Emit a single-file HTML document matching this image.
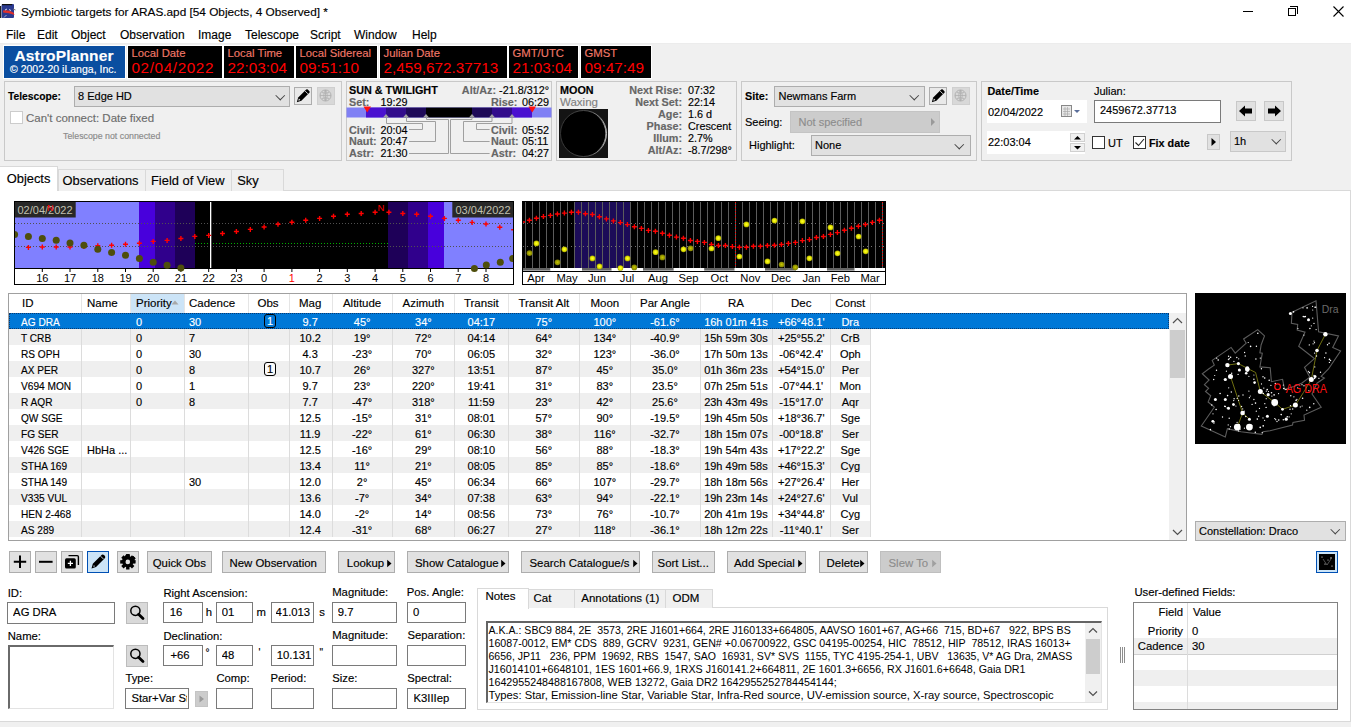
<!DOCTYPE html>
<html><head><meta charset="utf-8">
<style>
*{box-sizing:border-box;margin:0;padding:0}
html,body{width:1351px;height:727px;overflow:hidden;background:#f0f0f0;font-family:"Liberation Sans",sans-serif;font-size:12px;color:#000;-webkit-text-stroke:0.15px}
.blk .v{-webkit-text-stroke:0}
.a{position:absolute;white-space:nowrap}
div{white-space:nowrap}
.t{position:absolute;white-space:nowrap;line-height:1}
.grp{position:absolute;border:1px solid #c9c9c9}
.dd{position:absolute;background:#e1e1e1;border:1px solid #adadad}
.btn{position:absolute;background:#e1e1e1;border:1px solid #adadad;text-align:center}
.inp{position:absolute;background:#fff;border:1px solid #7a7a7a}
.blk{position:absolute;background:#000;top:46px;height:32px;outline:1px solid #fff}
.blk .l{position:absolute;left:3.5px;top:2.2px;font-size:11.3px;color:#f07868;line-height:1}
.blk .v{position:absolute;left:3.5px;top:14px;font-size:15.3px;color:#ff0000;line-height:1}
.chev{position:absolute;width:6.5px;height:6.5px;border-right:1px solid #444;border-bottom:1px solid #444;transform:rotate(45deg)}
</style></head><body>
<!-- title bar -->
<div class="a" style="left:0;top:0;width:1351px;height:43px;background:#fff"></div>
<div class="a" style="left:0;top:42.5px;width:1351px;height:1.5px;background:#ececec"></div>
<svg class="a" style="left:0px;top:0px" width="18" height="22" viewBox="0 0 18 22"><rect x="0" y="6" width="1.3" height="12" fill="#222"/><rect x="1.6" y="4" width="12.4" height="14" rx="1" fill="#2b3a8f"/><rect x="2" y="4" width="10" height="1.2" fill="#111"/><path d="M3 10.5 Q8 9.5 13.5 12.5 L14.5 15 Q9 12.5 3.2 12.5Z" fill="#e0302a"/><path d="M5 10 L7 9 M9 9.5 L11 10.5" stroke="#fff" stroke-width="0.8"/><path d="M13 9 L15.5 10" stroke="#777" stroke-width="1"/><path d="M4 17.5 L6.5 15" stroke="#ddd" stroke-width="0.7"/></svg>
<div class="t" style="left:21px;top:7px;font-size:11.8px">Symbiotic targets for ARAS.apd [54 Objects, 4 Observed] *</div>
<div class="a" style="left:1243px;top:11px;width:10px;height:1px;background:#000"></div>
<div class="a" style="left:1288px;top:8px;width:8px;height:8px;border:1px solid #000"></div>
<div class="a" style="left:1290px;top:6px;width:8px;height:8px;border-top:1px solid #000;border-right:1px solid #000"></div>
<svg class="a" style="left:1333px;top:6px" width="11" height="11"><path d="M0.5 0.5L10.5 10.5M10.5 0.5L0.5 10.5" stroke="#000" stroke-width="1.1"/></svg>
<!-- menu -->
<div class="t" style="left:6px;top:28.8px;font-size:12px">File</div>
<div class="t" style="left:37px;top:28.8px;font-size:12px">Edit</div>
<div class="t" style="left:71px;top:28.8px;font-size:12px">Object</div>
<div class="t" style="left:120px;top:28.8px;font-size:12px">Observation</div>
<div class="t" style="left:198px;top:28.8px;font-size:12px">Image</div>
<div class="t" style="left:245px;top:28.8px;font-size:12px">Telescope</div>
<div class="t" style="left:310px;top:28.8px;font-size:12px">Script</div>
<div class="t" style="left:354px;top:28.8px;font-size:12px">Window</div>
<div class="t" style="left:412px;top:28.8px;font-size:12px">Help</div>

<!-- AstroPlanner logo -->
<div class="a" style="left:4px;top:46px;width:121px;height:32px;background:#0a4ea0;outline:1px solid #fff"></div>
<div class="t" style="left:14.5px;top:47.6px;font-size:15.5px;font-weight:bold;color:#fff;letter-spacing:0.15px">AstroPlanner</div>
<div class="t" style="left:10px;top:63.5px;font-size:10.5px;color:#fff">© 2002-20 iLanga, Inc.</div>

<div class="blk" style="left:128px;width:94px"><div class="l">Local Date</div><div class="v" style="letter-spacing:0.6px">02/04/2022</div></div>
<div class="blk" style="left:224px;width:70px"><div class="l">Local Time</div><div class="v">22:03:04</div></div>
<div class="blk" style="left:296px;width:81px"><div class="l">Local Sidereal</div><div class="v">09:51:10</div></div>
<div class="blk" style="left:380px;width:127px"><div class="l">Julian Date</div><div class="v">2,459,672.37713</div></div>
<div class="blk" style="left:509px;width:69px"><div class="l">GMT/UTC</div><div class="v">21:03:04</div></div>
<div class="blk" style="left:581px;width:70px"><div class="l">GMST</div><div class="v">09:47:49</div></div>


<!-- Telescope panel -->
<div class="grp" style="left:4px;top:81px;width:338px;height:80px"></div>
<div class="t" style="left:8px;top:91.5px;font-size:10.3px;font-weight:bold">Telescope:</div>
<div class="dd" style="left:74px;top:86px;width:216px;height:21px"></div>
<div class="t" style="left:78px;top:91px;font-size:11px">8 Edge HD</div>
<div class="chev" style="left:277px;top:92px"></div>
<div class="btn" style="left:294px;top:87px;width:18px;height:18px;background:#e9e9e9"></div>
<svg class="a" style="left:295px;top:88px" width="16" height="16" viewBox="0 0 16 16"><path d="M1.8 14.2 L3.2 9.6 L11.2 1.6 Q12 0.9 12.8 1.6 L14.4 3.2 Q15.1 4 14.4 4.8 L6.4 12.8 Z" fill="#000"/><path d="M10.2 3.1 L12.9 5.8" stroke="#e9e9e9" stroke-width="0.9"/><path d="M3.3 12.7 L3.9 10.6 L5.4 12.1Z" fill="#e9e9e9"/></svg>
<div class="btn" style="left:317px;top:87px;width:18px;height:18px;background:#d8d8d8;border-color:#cfcfcf"></div>
<svg class="a" style="left:318px;top:88px" width="16" height="16" viewBox="0 0 16 16"><circle cx="7.5" cy="7.5" r="5.5" fill="none" stroke="#b0b0b0"/><path d="M2 7.5H13M7.5 2V13M4 4.5Q7.5 6 11 4.5M4 10.5Q7.5 9 11 10.5M7.5 2Q4 7.5 7.5 13M7.5 2Q11 7.5 7.5 13" fill="none" stroke="#b0b0b0" stroke-width="0.8"/></svg>
<div class="a" style="left:10px;top:111px;width:13px;height:13px;background:#fff;border:1px solid #cccccc"></div>
<div class="t" style="left:26px;top:112.5px;font-size:11.5px;color:#6d6d6d">Can't connect: Date fixed</div>
<div class="t" style="left:63px;top:132px;font-size:8.8px;color:#8a8a8a">Telescope not connected</div>

<!-- Sun panel -->
<div class="grp" style="left:346px;top:81px;width:206px;height:80px"></div>
<div class="t" style="left:349px;top:85px;font-size:10.8px;font-weight:bold">SUN &amp; TWILIGHT</div>
<div class="t" style="left:459px;top:85px;font-size:10.8px;font-weight:bold;color:#666;width:90px;text-align:right">Alt/Az: <span style="color:#000;font-weight:normal">-21.8/312°</span></div>
<div class="t" style="left:349px;top:96.5px;font-size:10.8px;font-weight:bold;color:#666">Set:</div>
<div class="t" style="left:380.5px;top:96.5px;font-size:10.8px">19:29</div>
<div class="t" style="left:491px;top:96.5px;font-size:10.8px;font-weight:bold;color:#666">Rise:</div>
<div class="t" style="left:522px;top:96.5px;font-size:10.8px">06:29</div>
<svg class="a" style="left:346px;top:106px" width="206" height="54" viewBox="0 0 206 54">
<rect x="0.5" y="1.5" width="205" height="10" fill="#8080f4"/>
<rect x="20" y="1.5" width="20" height="10" fill="#4a10d0"/>
<rect x="40" y="1.5" width="20" height="10" fill="#320c8c"/>
<rect x="60" y="1.5" width="20" height="10" fill="#1e0a58"/>
<rect x="80" y="1.5" width="46" height="10" fill="#000"/>
<rect x="126" y="1.5" width="20" height="10" fill="#1e0a58"/>
<rect x="146" y="1.5" width="20" height="10" fill="#320c8c"/>
<rect x="166" y="1.5" width="20" height="10" fill="#4a10d0"/>
<path d="M17.5 0.5 L25 0.5 L21.2 6.5Z M182.5 0.5 L190 0.5 L186.2 6.5Z" fill="#ff1010"/>
<path d="M37 11.5 L40 8 L43 11.5Z M57 11.5 L60 8 L63 11.5Z M77 11.5 L80 8 L83 11.5Z M123 11.5 L126 8 L129 11.5Z M143 11.5 L146 8 L149 11.5Z M163 11.5 L166 8 L169 11.5Z" fill="#a0a0a0"/>
<path d="M40.5 11 V17.5 H76.5 V23.5 H63 M60.5 11 V15.5 H89.5 V35.5 H63 M80.5 11 V13.5 H102.5 V47.5 H63 M126 11 V13.5 H104.5 V47.5 H143.6 M146 11 V15.5 H117.5 V35.5 H143.6 M166 11 V17.5 H130.5 V23.5 H143.6" fill="none" stroke="#a0a0a0" stroke-width="1"/>
</svg>
<div class="t" style="left:349px;top:124.5px;font-size:10.8px;font-weight:bold;color:#666">Civil:</div>
<div class="t" style="left:380.5px;top:124.5px;font-size:10.8px">20:04</div>
<div class="t" style="left:349px;top:136px;font-size:10.8px;font-weight:bold;color:#666">Naut:</div>
<div class="t" style="left:380.5px;top:136px;font-size:10.8px">20:47</div>
<div class="t" style="left:349px;top:148px;font-size:10.8px;font-weight:bold;color:#666">Astr:</div>
<div class="t" style="left:380.5px;top:148px;font-size:10.8px">21:30</div>
<div class="t" style="left:491px;top:124.5px;font-size:10.8px;font-weight:bold;color:#666">Civil:</div>
<div class="t" style="left:522px;top:124.5px;font-size:10.8px">05:52</div>
<div class="t" style="left:491px;top:136px;font-size:10.8px;font-weight:bold;color:#666">Naut:</div>
<div class="t" style="left:522px;top:136px;font-size:10.8px">05:11</div>
<div class="t" style="left:491px;top:148px;font-size:10.8px;font-weight:bold;color:#666">Astr:</div>
<div class="t" style="left:522px;top:148px;font-size:10.8px">04:27</div>

<!-- Moon panel -->
<div class="grp" style="left:556px;top:81px;width:181px;height:80px"></div>
<div class="t" style="left:560px;top:84.5px;font-size:10.8px;font-weight:bold">MOON</div>
<div class="t" style="left:560px;top:96.5px;font-size:11.5px;color:#808080">Waxing</div>
<svg class="a" style="left:559px;top:109px" width="49" height="49" viewBox="0 0 49 49"><defs><linearGradient id="mg" x1="0" x2="1"><stop offset="0" stop-color="#3a3a3a"/><stop offset="0.6" stop-color="#555"/><stop offset="1" stop-color="#d8d8d8"/></linearGradient></defs><rect width="49" height="49" fill="#141414"/><circle cx="24.5" cy="24.5" r="23" fill="#000" stroke="url(#mg)" stroke-width="0.9"/><path d="M36 5.5 A22.5 22.5 0 0 1 36 43.5 A24 22.5 0 0 0 36 5.5Z" fill="#cfcfcf" opacity="0.85"/></svg>
<div class="t" style="left:600px;top:83.6px;width:82px;text-align:right;font-size:10.8px;font-weight:bold;color:#666;line-height:12px">Next Rise:<br>Next Set:<br>Age:<br>Phase:<br>Illum:<br>Alt/Az:</div>
<div class="t" style="left:688px;top:83.6px;font-size:10.8px;line-height:12px">07:32<br>22:14<br>1.6 d<br>Crescent<br>2.7%<br>-8.7/298°</div>

<!-- Site panel -->
<div class="grp" style="left:741px;top:81px;width:236px;height:80px"></div>
<div class="t" style="left:745px;top:91px;font-size:10.8px;font-weight:bold">Site:</div>
<div class="dd" style="left:774px;top:86px;width:151px;height:21px"></div>
<div class="t" style="left:778.5px;top:91px;font-size:11px">Newmans Farm</div>
<div class="chev" style="left:911px;top:92px"></div>
<div class="btn" style="left:929px;top:87px;width:18px;height:18px;background:#e9e9e9"></div>
<svg class="a" style="left:930px;top:88px" width="16" height="16" viewBox="0 0 16 16"><path d="M1.8 14.2 L3.2 9.6 L11.2 1.6 Q12 0.9 12.8 1.6 L14.4 3.2 Q15.1 4 14.4 4.8 L6.4 12.8 Z" fill="#000"/><path d="M10.2 3.1 L12.9 5.8" stroke="#e9e9e9" stroke-width="0.9"/><path d="M3.3 12.7 L3.9 10.6 L5.4 12.1Z" fill="#e9e9e9"/></svg>
<div class="btn" style="left:952px;top:87px;width:18px;height:18px;background:#d8d8d8;border-color:#cfcfcf"></div>
<svg class="a" style="left:953px;top:88px" width="16" height="16" viewBox="0 0 16 16"><circle cx="7.5" cy="7.5" r="5.5" fill="none" stroke="#b0b0b0"/><path d="M2 7.5H13M7.5 2V13M4 4.5Q7.5 6 11 4.5M4 10.5Q7.5 9 11 10.5M7.5 2Q4 7.5 7.5 13M7.5 2Q11 7.5 7.5 13" fill="none" stroke="#b0b0b0" stroke-width="0.8"/></svg>
<div class="t" style="left:745px;top:117px;font-size:11px">Seeing:</div>
<div class="a" style="left:790px;top:111px;width:150px;height:22px;background:#cccccc;border:1px solid #c4c4c4"></div>
<div class="t" style="left:798.5px;top:117px;font-size:11px;color:#8d8d8d">Not specified</div>
<svg class="a" style="left:930px;top:118px" width="6" height="8"><path d="M1 0 L5 4 L1 8Z" fill="#9a9a9a"/></svg>
<div class="t" style="left:749px;top:140px;font-size:11px">Highlight:</div>
<div class="dd" style="left:811px;top:135px;width:160px;height:21px"></div>
<div class="t" style="left:815px;top:140px;font-size:11px">None</div>
<div class="chev" style="left:956px;top:141px"></div>

<!-- Date/time panel -->
<div class="grp" style="left:981px;top:81px;width:311px;height:80px"></div>
<div class="t" style="left:987.5px;top:85.5px;font-size:10.8px;font-weight:bold">Date/Time</div>
<div class="t" style="left:1094px;top:85.5px;font-size:11px">Julian:</div>
<div class="a" style="left:987px;top:100px;width:100px;height:23px;background:#fff"></div>
<div class="t" style="left:988px;top:106.5px;font-size:11px">02/04/2022</div>
<svg class="a" style="left:1060px;top:104px" width="22" height="14" viewBox="0 0 22 14"><rect x="1.5" y="1.5" width="10" height="11" fill="#e8e8e8" stroke="#888"/><path d="M3 5H10M3 7.5H10M3 10H10M5 3V12M7.5 3V12" stroke="#aaa" stroke-width="0.7"/><path d="M14 6 L20 6 L17 9Z" fill="#5a6e9a"/></svg>
<div class="inp" style="left:1094px;top:100px;width:127px;height:23px;border-color:#7a7a7a"></div>
<div class="t" style="left:1100px;top:104.5px;font-size:11px">2459672.37713</div>
<div class="btn" style="left:1236px;top:101px;width:20px;height:20px;background:#e1e1e1;border-color:#c8c8c8"></div>
<svg class="a" style="left:1238px;top:104px" width="16" height="14" viewBox="0 0 16 14"><path d="M1 7 L7 1.5 V4.5 H14 V9.5 H7 V12.5Z" fill="#000"/></svg>
<div class="btn" style="left:1264px;top:101px;width:20px;height:20px;background:#e1e1e1;border-color:#c8c8c8"></div>
<svg class="a" style="left:1266px;top:104px" width="16" height="14" viewBox="0 0 16 14"><path d="M15 7 L9 1.5 V4.5 H2 V9.5 H9 V12.5Z" fill="#000"/></svg>
<div class="a" style="left:987px;top:131px;width:98px;height:23px;background:#fff"></div>
<div class="t" style="left:988px;top:137px;font-size:11px">22:03:04</div>
<div class="a" style="left:1070px;top:133px;width:15px;height:9px;background:#f0f0f0;border:1px solid #d0d0d0"></div>
<div class="a" style="left:1070px;top:143px;width:15px;height:9px;background:#f0f0f0;border:1px solid #d0d0d0"></div>
<svg class="a" style="left:1073px;top:135px" width="9" height="16"><path d="M1 4.5 L4.5 1 L8 4.5Z M1 11 L4.5 14.5 L8 11Z" fill="#000"/></svg>
<div class="a" style="left:1092px;top:136px;width:13px;height:13px;background:#fff;border:1px solid #333"></div>
<div class="t" style="left:1108px;top:137.5px;font-size:11px">UT</div>
<div class="a" style="left:1133px;top:136px;width:13px;height:13px;background:#fff;border:1px solid #333"></div>
<svg class="a" style="left:1134px;top:137px" width="11" height="11"><path d="M1.5 5.5 L4.5 8.5 L10 2" fill="none" stroke="#222" stroke-width="1.1"/></svg>
<div class="t" style="left:1149px;top:137.5px;font-size:10.8px;font-weight:bold">Fix date</div>
<div class="btn" style="left:1207px;top:134px;width:13px;height:16px;background:#e1e1e1;border-color:#c8c8c8"></div>
<svg class="a" style="left:1211px;top:138px" width="6" height="8"><path d="M0.5 0 L5 4 L0.5 8Z" fill="#000"/></svg>
<div class="dd" style="left:1230px;top:131px;width:56px;height:21px;border-color:#c8c8c8"></div>
<div class="t" style="left:1234px;top:136px;font-size:11px">1h</div>
<div class="chev" style="left:1273px;top:136px"></div>

<!-- TOP PANELS -->
<!--mid1-->
<div class="a" style="left:0;top:190px;width:1351px;height:532px;background:#fff;border-top:1px solid #d9d9d9;border-right:1px solid #d9d9d9;border-bottom:1px solid #d9d9d9"></div>
<div class="a" style="left:57.5px;top:168.5px;width:88.0px;height:22.5px;background:#f0f0f0;border:1px solid #d9d9d9;border-bottom:none"></div>
<div class="t" style="left:62.6px;top:175px;font-size:12.9px">Observations</div>
<div class="a" style="left:144.5px;top:168.5px;width:87.0px;height:22.5px;background:#f0f0f0;border:1px solid #d9d9d9;border-bottom:none"></div>
<div class="t" style="left:151px;top:175px;font-size:12.9px">Field of View</div>
<div class="a" style="left:230.5px;top:168.5px;width:53.0px;height:22.5px;background:#f0f0f0;border:1px solid #d9d9d9;border-bottom:none"></div>
<div class="t" style="left:237.2px;top:175px;font-size:12.9px">Sky</div>
<div class="a" style="left:0;top:166px;width:58px;height:25px;background:#fff;border:1px solid #d9d9d9;border-left:none;border-bottom:none"></div>
<div class="t" style="left:6.7px;top:172.5px;font-size:12.9px">Objects</div>
<svg class="a" style="left:14px;top:201px;font-family:'Liberation Sans'" width="500" height="84" viewBox="0 0 500 84"><rect x="0" y="0" width="500" height="84" fill="#fff"/><rect x="0" y="0" width="125" height="67" fill="#8080ff"/><rect x="125" y="0" width="16" height="67" fill="#4800dc"/><rect x="141" y="0" width="20" height="67" fill="#30008c"/><rect x="161" y="0" width="20" height="67" fill="#1e0058"/><rect x="181" y="0" width="193" height="67" fill="#000"/><rect x="374" y="0" width="20" height="67" fill="#1e0058"/><rect x="394" y="0" width="20" height="67" fill="#30008c"/><rect x="414" y="0" width="16" height="67" fill="#4800dc"/><rect x="430" y="0" width="69" height="67" fill="#8080ff"/><line x1="1" y1="22.5" x2="499" y2="22.5" stroke="#505050" stroke-width="1" stroke-dasharray="1 2"/><line x1="1" y1="45.5" x2="499" y2="45.5" stroke="#505050" stroke-width="1" stroke-dasharray="1 2"/><line x1="181" y1="42.5" x2="374" y2="42.5" stroke="#00b000" stroke-width="1" stroke-dasharray="1 2"/><rect x="196" y="0" width="1.3" height="67" fill="#fff"/><path d="M11.9 46.4h5M14.4 43.9v5M25.8 46.0h5M28.3 43.5v5M39.7 46.0h5M42.2 43.5v5M53.5 46.0h5M56.0 43.5v5M67.4 45.5h5M69.9 43.0v5M81.3 44.7h5M83.8 42.2v5M95.1 44.2h5M97.6 41.7v5M109.0 43.3h5M111.5 40.8v5M122.9 42.3h5M125.4 39.8v5M136.7 40.4h5M139.2 37.9v5M150.6 39.4h5M153.1 36.9v5M164.4 37.5h5M166.9 35.0v5M178.3 35.4h5M180.8 32.9v5M192.2 34.4h5M194.7 31.9v5M206.0 32.5h5M208.5 30.0v5M219.9 30.5h5M222.4 28.0v5M233.8 28.4h5M236.3 25.9v5M247.6 26.0h5M250.1 23.5v5M261.5 23.2h5M264.0 20.7v5M275.4 21.2h5M277.9 18.7v5M289.2 19.3h5M291.7 16.8v5M303.1 17.4h5M305.6 14.9v5M317.0 15.2h5M319.5 12.7v5M330.8 13.3h5M333.3 10.8v5M344.7 12.5h5M347.2 10.0v5M358.6 11.3h5M361.1 8.8v5M372.4 11.3h5M374.9 8.8v5M386.3 12.5h5M388.8 10.0v5M400.2 13.3h5M402.7 10.8v5M414.0 15.2h5M416.5 12.7v5M427.9 17.4h5M430.4 14.9v5M441.8 19.3h5M444.2 16.8v5M455.6 21.4h5M458.1 18.9v5M469.5 23.0h5M472.0 20.5v5M483.3 26.3h5M485.8 23.8v5M497.2 28.8h5M499.7 26.3v5" stroke="#ff0000" stroke-width="1.4" fill="none"/><rect x="0" y="67" width="500" height="17" fill="#fff"/><rect x="0.5" y="0.5" width="499" height="83" fill="none" stroke="#000"/><line x1="0" y1="67.5" x2="500" y2="67.5" stroke="#000"/><line x1="28.3" y1="67" x2="28.3" y2="71" stroke="#000"/><text x="28.3" y="81" font-size="11" text-anchor="middle" fill="#000">16</text><line x1="56.0" y1="67" x2="56.0" y2="71" stroke="#000"/><text x="56.0" y="81" font-size="11" text-anchor="middle" fill="#000">17</text><line x1="83.8" y1="67" x2="83.8" y2="71" stroke="#000"/><text x="83.8" y="81" font-size="11" text-anchor="middle" fill="#000">18</text><line x1="111.5" y1="67" x2="111.5" y2="71" stroke="#000"/><text x="111.5" y="81" font-size="11" text-anchor="middle" fill="#000">19</text><line x1="139.2" y1="67" x2="139.2" y2="71" stroke="#000"/><text x="139.2" y="81" font-size="11" text-anchor="middle" fill="#000">20</text><line x1="166.9" y1="67" x2="166.9" y2="71" stroke="#000"/><text x="166.9" y="81" font-size="11" text-anchor="middle" fill="#000">21</text><line x1="194.7" y1="67" x2="194.7" y2="71" stroke="#000"/><text x="194.7" y="81" font-size="11" text-anchor="middle" fill="#000">22</text><line x1="222.4" y1="67" x2="222.4" y2="71" stroke="#000"/><text x="222.4" y="81" font-size="11" text-anchor="middle" fill="#000">23</text><line x1="250.1" y1="67" x2="250.1" y2="71" stroke="#000"/><text x="250.1" y="81" font-size="11" text-anchor="middle" fill="#000">0</text><line x1="277.9" y1="67" x2="277.9" y2="71" stroke="#000"/><text x="277.9" y="81" font-size="11" text-anchor="middle" fill="#ff0000">1</text><line x1="305.6" y1="67" x2="305.6" y2="71" stroke="#000"/><text x="305.6" y="81" font-size="11" text-anchor="middle" fill="#000">2</text><line x1="333.3" y1="67" x2="333.3" y2="71" stroke="#000"/><text x="333.3" y="81" font-size="11" text-anchor="middle" fill="#000">3</text><line x1="361.1" y1="67" x2="361.1" y2="71" stroke="#000"/><text x="361.1" y="81" font-size="11" text-anchor="middle" fill="#000">4</text><line x1="388.8" y1="67" x2="388.8" y2="71" stroke="#000"/><text x="388.8" y="81" font-size="11" text-anchor="middle" fill="#000">5</text><line x1="416.5" y1="67" x2="416.5" y2="71" stroke="#000"/><text x="416.5" y="81" font-size="11" text-anchor="middle" fill="#000">6</text><line x1="444.2" y1="67" x2="444.2" y2="71" stroke="#000"/><text x="444.2" y="81" font-size="11" text-anchor="middle" fill="#000">7</text><line x1="472.0" y1="67" x2="472.0" y2="71" stroke="#000"/><text x="472.0" y="81" font-size="11" text-anchor="middle" fill="#000">8</text><rect x="0" y="0" width="61.7" height="16.5" fill="#282828"/><text x="3.5" y="13" font-size="11" fill="#c0c0b0" textLength="55">02/04/2022</text><rect x="438.3" y="0" width="61.19999999999999" height="16.5" fill="#282828"/><text x="441.5" y="13" font-size="11" fill="#c0c0b0" textLength="55">03/04/2022</text><text x="33" y="10" font-size="9" fill="#ff0000">N</text><circle cx="0.6" cy="33.4" r="3.5" fill="#4e4e0c"/><circle cx="14.4" cy="35.6" r="3.5" fill="#4e4e0c"/><circle cx="28.3" cy="37.5" r="3.5" fill="#4e4e0c"/><circle cx="42.2" cy="39.3" r="3.5" fill="#4e4e0c"/><circle cx="56.0" cy="42.1" r="3.5" fill="#4e4e0c"/><circle cx="69.9" cy="44.3" r="3.5" fill="#4e4e0c"/><circle cx="83.8" cy="48.2" r="3.5" fill="#4e4e0c"/><circle cx="97.6" cy="51.4" r="3.5" fill="#4e4e0c"/><circle cx="111.5" cy="54.3" r="3.5" fill="#4e4e0c"/><circle cx="125.4" cy="57.5" r="3.5" fill="#4e4e0c"/><circle cx="139.2" cy="61.3" r="3.5" fill="#4e4e0c"/><circle cx="153.1" cy="64.2" r="3.5" fill="#4e4e0c"/><circle cx="166.9" cy="67.0" r="3.5" fill="#4e4e0c"/><circle cx="460.4" cy="67.4" r="3.5" fill="#4e4e0c"/><circle cx="472.3" cy="64.0" r="3.5" fill="#4e4e0c"/><circle cx="486.3" cy="61.2" r="3.5" fill="#4e4e0c"/><circle cx="498.7" cy="57.5" r="3.5" fill="#4e4e0c"/><text x="363.5" y="10" font-size="9.5" fill="#ff0000">N</text><rect x="0.5" y="0.5" width="499" height="83" fill="none" stroke="#000"/></svg>
<svg class="a" style="left:522px;top:201px;font-family:'Liberation Sans'" width="364" height="84" viewBox="0 0 364 84"><rect x="0" y="0" width="364" height="84" fill="#fff"/><rect x="0" y="0" width="364" height="67" fill="#000"/><rect x="53" y="0" width="55.5" height="67" fill="#1c0c58"/><rect x="3.0" y="1" width="1" height="66" fill="#5c5c5c"/><rect x="10.0" y="1" width="1" height="66" fill="#5c5c5c"/><rect x="17.0" y="1" width="1" height="66" fill="#5c5c5c"/><rect x="24.0" y="1" width="1" height="66" fill="#5c5c5c"/><rect x="31.0" y="1" width="1" height="66" fill="#5c5c5c"/><rect x="38.0" y="1" width="1" height="66" fill="#5c5c5c"/><rect x="45.0" y="1" width="1" height="66" fill="#5c5c5c"/><rect x="52.0" y="1" width="1" height="66" fill="#5c5c5c"/><rect x="59.0" y="1" width="1" height="66" fill="#5c5c5c"/><rect x="66.0" y="1" width="1" height="66" fill="#5c5c5c"/><rect x="73.0" y="1" width="1" height="66" fill="#5c5c5c"/><rect x="80.0" y="1" width="1" height="66" fill="#5c5c5c"/><rect x="87.0" y="1" width="1" height="66" fill="#5c5c5c"/><rect x="94.0" y="1" width="1" height="66" fill="#5c5c5c"/><rect x="101.0" y="1" width="1" height="66" fill="#5c5c5c"/><rect x="108.0" y="1" width="1" height="66" fill="#5c5c5c"/><rect x="115.0" y="1" width="1" height="66" fill="#5c5c5c"/><rect x="122.0" y="1" width="1" height="66" fill="#5c5c5c"/><rect x="129.0" y="1" width="1" height="66" fill="#5c5c5c"/><rect x="136.0" y="1" width="1" height="66" fill="#5c5c5c"/><rect x="143.0" y="1" width="1" height="66" fill="#5c5c5c"/><rect x="150.0" y="1" width="1" height="66" fill="#5c5c5c"/><rect x="157.0" y="1" width="1" height="66" fill="#5c5c5c"/><rect x="164.0" y="1" width="1" height="66" fill="#5c5c5c"/><rect x="171.0" y="1" width="1" height="66" fill="#5c5c5c"/><rect x="178.0" y="1" width="1" height="66" fill="#5c5c5c"/><rect x="185.0" y="1" width="1" height="66" fill="#5c5c5c"/><rect x="192.0" y="1" width="1" height="66" fill="#5c5c5c"/><rect x="199.0" y="1" width="1" height="66" fill="#5c5c5c"/><rect x="206.0" y="1" width="1" height="66" fill="#5c5c5c"/><rect x="213.0" y="1" width="1" height="66" fill="#5c5c5c"/><rect x="220.0" y="1" width="1" height="66" fill="#5c5c5c"/><rect x="227.0" y="1" width="1" height="66" fill="#5c5c5c"/><rect x="234.0" y="1" width="1" height="66" fill="#5c5c5c"/><rect x="241.0" y="1" width="1" height="66" fill="#5c5c5c"/><rect x="248.0" y="1" width="1" height="66" fill="#5c5c5c"/><rect x="255.0" y="1" width="1" height="66" fill="#5c5c5c"/><rect x="262.0" y="1" width="1" height="66" fill="#5c5c5c"/><rect x="269.0" y="1" width="1" height="66" fill="#5c5c5c"/><rect x="276.0" y="1" width="1" height="66" fill="#5c5c5c"/><rect x="283.0" y="1" width="1" height="66" fill="#5c5c5c"/><rect x="290.0" y="1" width="1" height="66" fill="#5c5c5c"/><rect x="297.0" y="1" width="1" height="66" fill="#5c5c5c"/><rect x="304.0" y="1" width="1" height="66" fill="#5c5c5c"/><rect x="311.0" y="1" width="1" height="66" fill="#5c5c5c"/><rect x="318.0" y="1" width="1" height="66" fill="#5c5c5c"/><rect x="325.0" y="1" width="1" height="66" fill="#5c5c5c"/><rect x="332.0" y="1" width="1" height="66" fill="#5c5c5c"/><rect x="339.0" y="1" width="1" height="66" fill="#5c5c5c"/><rect x="346.0" y="1" width="1" height="66" fill="#5c5c5c"/><rect x="353.0" y="1" width="1" height="66" fill="#5c5c5c"/><rect x="360.0" y="1" width="1" height="66" fill="#5c5c5c"/><line x1="1" y1="22.5" x2="363" y2="22.5" stroke="#707070" stroke-width="1" stroke-dasharray="1 3"/><line x1="1" y1="45.5" x2="363" y2="45.5" stroke="#707070" stroke-width="1" stroke-dasharray="1 3"/><line x1="213.5" y1="1" x2="213.5" y2="67" stroke="#ff0000" stroke-width="1" stroke-dasharray="1 2"/><line x1="360.5" y1="1" x2="360.5" y2="67" stroke="#ff0000" stroke-width="1" stroke-dasharray="1 2"/><path d="M4.9 19.3h5M7.4 16.8v5M11.9 17.3h5M14.4 14.8v5M18.9 15.6h5M21.4 13.1v5M25.9 14.4h5M28.4 11.9v5M32.9 13.0h5M35.4 10.5v5M39.9 12.1h5M42.4 9.6v5M46.9 11.2h5M49.4 8.7v5M53.9 11.2h5M56.4 8.7v5M60.9 12.7h5M63.4 10.2v5M67.9 13.5h5M70.4 11.0v5M74.9 15.8h5M77.4 13.3v5M81.9 17.9h5M84.4 15.4v5M88.9 19.9h5M91.4 17.4v5M95.9 21.6h5M98.4 19.1v5M102.9 23.6h5M105.4 21.1v5M109.9 25.7h5M112.4 23.2v5M116.9 27.4h5M119.4 24.9v5M123.9 29.4h5M126.4 26.9v5M130.9 30.3h5M133.4 27.8v5M137.9 32.3h5M140.4 29.8v5M144.9 34.3h5M147.4 31.8v5M151.9 36.1h5M154.4 33.6v5M158.9 37.2h5M161.4 34.7v5M165.9 39.5h5M168.4 37.0v5M172.9 40.4h5M175.4 37.9v5M179.9 41.4h5M182.4 38.9v5M186.9 43.5h5M189.4 41.0v5M193.9 44.5h5M196.4 42.0v5M200.9 44.5h5M203.4 42.0v5M207.9 45.6h5M210.4 43.1v5M214.9 46.3h5M217.4 43.8v5M221.9 46.3h5M224.4 43.8v5M228.9 45.2h5M231.4 42.7v5M235.9 45.2h5M238.4 42.7v5M242.9 44.5h5M245.4 42.0v5M249.9 44.2h5M252.4 41.7v5M256.9 43.5h5M259.4 41.0v5M263.9 42.4h5M266.4 39.9v5M270.9 41.4h5M273.4 38.9v5M277.9 39.6h5M280.4 37.1v5M284.9 38.6h5M287.4 36.1v5M291.9 36.5h5M294.4 34.0v5M298.9 35.5h5M301.4 33.0v5M305.9 33.4h5M308.4 30.9v5M312.9 31.6h5M315.4 29.1v5M319.9 29.2h5M322.4 26.7v5M326.9 27.3h5M329.4 24.8v5M333.9 25.2h5M336.4 22.7v5M340.9 23.5h5M343.4 21.0v5M347.9 21.4h5M350.4 18.9v5M354.9 19.2h5M357.4 16.7v5M1 21h2" stroke="#ff0000" stroke-width="1.4" fill="none"/><defs><radialGradient id="yb"><stop offset="0" stop-color="#ffff30"/><stop offset="0.6" stop-color="#e8e800"/><stop offset="1" stop-color="#a0a000"/></radialGradient><radialGradient id="yd"><stop offset="0" stop-color="#c8c800"/><stop offset="1" stop-color="#808000"/></radialGradient></defs><rect x="0" y="67" width="364" height="17" fill="#fff"/><rect x="1.0" y="67" width="27.5" height="2.6" fill="#646464"/><rect x="28.5" y="67" width="31.5" height="2.6" fill="#ffffff"/><rect x="60.0" y="67" width="29.7" height="2.6" fill="#646464"/><rect x="89.7" y="67" width="31.3" height="2.6" fill="#ffffff"/><rect x="121.0" y="67" width="30.8" height="2.6" fill="#646464"/><rect x="151.8" y="67" width="30.4" height="2.6" fill="#ffffff"/><rect x="182.2" y="67" width="30.5" height="2.6" fill="#646464"/><rect x="212.7" y="67" width="30.3" height="2.6" fill="#ffffff"/><rect x="243.0" y="67" width="31.0" height="2.6" fill="#646464"/><rect x="274.0" y="67" width="31.0" height="2.6" fill="#ffffff"/><rect x="305.0" y="67" width="27.7" height="2.6" fill="#646464"/><rect x="332.7" y="67" width="30.3" height="2.6" fill="#ffffff"/><rect x="0" y="70" width="364" height="1" fill="#000"/><circle cx="7.5" cy="52.2" r="2.85" fill="url(#yd)"/><circle cx="14.4" cy="42.4" r="2.85" fill="url(#yb)"/><circle cx="35.5" cy="61.3" r="2.85" fill="url(#yd)"/><circle cx="42.4" cy="48.3" r="2.85" fill="url(#yb)"/><circle cx="70.4" cy="57.4" r="2.85" fill="url(#yb)"/><circle cx="77.5" cy="65.4" r="2.85" fill="url(#yb)"/><circle cx="98.4" cy="67.0" r="2.85" fill="url(#yb)"/><circle cx="105.5" cy="57.4" r="2.85" fill="url(#yb)"/><circle cx="112.3" cy="66.4" r="2.85" fill="url(#yd)"/><circle cx="133.6" cy="51.2" r="2.85" fill="url(#yb)"/><circle cx="140.4" cy="56.4" r="2.85" fill="url(#yd)"/><circle cx="161.5" cy="48.3" r="2.85" fill="url(#yb)"/><circle cx="168.6" cy="47.3" r="2.85" fill="url(#yd)"/><circle cx="189.5" cy="47.5" r="2.85" fill="url(#yb)"/><circle cx="196.3" cy="37.2" r="2.85" fill="url(#yb)"/><circle cx="217.4" cy="55.5" r="2.85" fill="url(#yb)"/><circle cx="224.4" cy="23.4" r="2.85" fill="url(#yb)"/><circle cx="245.5" cy="60.4" r="2.85" fill="url(#yb)"/><circle cx="252.5" cy="19.6" r="2.85" fill="url(#yb)"/><circle cx="259.6" cy="63.5" r="2.85" fill="url(#yd)"/><circle cx="273.3" cy="66.3" r="2.85" fill="url(#yd)"/><circle cx="280.4" cy="20.3" r="2.85" fill="url(#yb)"/><circle cx="287.4" cy="57.3" r="2.85" fill="url(#yb)"/><circle cx="308.5" cy="26.4" r="2.85" fill="url(#yb)"/><circle cx="315.5" cy="52.4" r="2.85" fill="url(#yb)"/><circle cx="336.6" cy="35.5" r="2.85" fill="url(#yb)"/><circle cx="343.7" cy="50.3" r="2.85" fill="url(#yb)"/><text x="14" y="80.5" font-size="11.2" text-anchor="middle" fill="#000">Apr</text><text x="45" y="80.5" font-size="11.2" text-anchor="middle" fill="#000">May</text><text x="75" y="80.5" font-size="11.2" text-anchor="middle" fill="#000">Jun</text><text x="105" y="80.5" font-size="11.2" text-anchor="middle" fill="#000">Jul</text><text x="136" y="80.5" font-size="11.2" text-anchor="middle" fill="#000">Aug</text><text x="166.5" y="80.5" font-size="11.2" text-anchor="middle" fill="#000">Sep</text><text x="197.29999999999995" y="80.5" font-size="11.2" text-anchor="middle" fill="#000">Oct</text><text x="228.29999999999995" y="80.5" font-size="11.2" text-anchor="middle" fill="#000">Nov</text><text x="258.9" y="80.5" font-size="11.2" text-anchor="middle" fill="#000">Dec</text><text x="289.5" y="80.5" font-size="11.2" text-anchor="middle" fill="#000">Jan</text><text x="318.29999999999995" y="80.5" font-size="11.2" text-anchor="middle" fill="#000">Feb</text><text x="348.20000000000005" y="80.5" font-size="11.2" text-anchor="middle" fill="#000">Mar</text><rect x="0.5" y="0.5" width="363" height="83" fill="none" stroke="#000"/></svg>
<!--/mid1-->
<!--table-->
<div class="a" style="left:8px;top:293px;width:1179px;height:248px;background:#fff;border:1px solid #a0a0a0"></div>
<div class="a" style="left:130.5px;top:294px;width:53px;height:19px;background:#cce4f7"></div>
<div class="a" style="left:9px;top:313px;width:1160px;height:16px;background:#0078d7;outline:1px dotted #0a3a70;outline-offset:-1px"></div>
<div class="a" style="left:9px;top:329px;width:862px;height:16px;background:#efefef"></div>
<div class="a" style="left:9px;top:361px;width:862px;height:16px;background:#efefef"></div>
<div class="a" style="left:9px;top:393px;width:862px;height:16px;background:#efefef"></div>
<div class="a" style="left:9px;top:425px;width:862px;height:16px;background:#efefef"></div>
<div class="a" style="left:9px;top:457px;width:862px;height:16px;background:#efefef"></div>
<div class="a" style="left:9px;top:489px;width:862px;height:16px;background:#efefef"></div>
<div class="a" style="left:9px;top:521px;width:862px;height:16px;background:#efefef"></div>
<div class="a" style="left:81px;top:294px;width:1px;height:19px;background:#e5e5e5"></div>
<div class="a" style="left:81px;top:329px;width:1px;height:208px;background:#dcdcdc"></div>
<div class="a" style="left:130px;top:294px;width:1px;height:19px;background:#e5e5e5"></div>
<div class="a" style="left:130px;top:329px;width:1px;height:208px;background:#dcdcdc"></div>
<div class="a" style="left:183.5px;top:294px;width:1px;height:19px;background:#e5e5e5"></div>
<div class="a" style="left:183.5px;top:329px;width:1px;height:208px;background:#dcdcdc"></div>
<div class="a" style="left:247.5px;top:294px;width:1px;height:19px;background:#e5e5e5"></div>
<div class="a" style="left:247.5px;top:329px;width:1px;height:208px;background:#dcdcdc"></div>
<div class="a" style="left:288.5px;top:294px;width:1px;height:19px;background:#e5e5e5"></div>
<div class="a" style="left:288.5px;top:329px;width:1px;height:208px;background:#dcdcdc"></div>
<div class="a" style="left:331.8px;top:294px;width:1px;height:19px;background:#e5e5e5"></div>
<div class="a" style="left:331.8px;top:329px;width:1px;height:208px;background:#dcdcdc"></div>
<div class="a" style="left:392.4px;top:294px;width:1px;height:19px;background:#e5e5e5"></div>
<div class="a" style="left:392.4px;top:329px;width:1px;height:208px;background:#dcdcdc"></div>
<div class="a" style="left:454.3px;top:294px;width:1px;height:19px;background:#e5e5e5"></div>
<div class="a" style="left:454.3px;top:329px;width:1px;height:208px;background:#dcdcdc"></div>
<div class="a" style="left:508.3px;top:294px;width:1px;height:19px;background:#e5e5e5"></div>
<div class="a" style="left:508.3px;top:329px;width:1px;height:208px;background:#dcdcdc"></div>
<div class="a" style="left:579.3px;top:294px;width:1px;height:19px;background:#e5e5e5"></div>
<div class="a" style="left:579.3px;top:329px;width:1px;height:208px;background:#dcdcdc"></div>
<div class="a" style="left:630.3px;top:294px;width:1px;height:19px;background:#e5e5e5"></div>
<div class="a" style="left:630.3px;top:329px;width:1px;height:208px;background:#dcdcdc"></div>
<div class="a" style="left:699.6px;top:294px;width:1px;height:19px;background:#e5e5e5"></div>
<div class="a" style="left:699.6px;top:329px;width:1px;height:208px;background:#dcdcdc"></div>
<div class="a" style="left:772.3px;top:294px;width:1px;height:19px;background:#e5e5e5"></div>
<div class="a" style="left:772.3px;top:329px;width:1px;height:208px;background:#dcdcdc"></div>
<div class="a" style="left:830.2px;top:294px;width:1px;height:19px;background:#e5e5e5"></div>
<div class="a" style="left:830.2px;top:329px;width:1px;height:208px;background:#dcdcdc"></div>
<div class="a" style="left:870.4px;top:294px;width:1px;height:19px;background:#e5e5e5"></div>
<div class="a" style="left:870.4px;top:329px;width:1px;height:208px;background:#dcdcdc"></div>
<div class="t" style="left:22px;top:297.5px;font-size:11.5px">ID</div>
<div class="t" style="left:87px;top:297.5px;font-size:11.5px">Name</div>
<div class="t" style="left:136px;top:297.5px;font-size:11.5px">Priority</div>
<div class="t" style="left:189px;top:297.5px;font-size:11.5px">Cadence</div>
<div class="t" style="left:247.5px;top:297.5px;width:41.0px;text-align:center;font-size:11.5px">Obs</div>
<div class="t" style="left:288.5px;top:297.5px;width:43.30000000000001px;text-align:center;font-size:11.5px">Mag</div>
<div class="t" style="left:331.8px;top:297.5px;width:60.599999999999966px;text-align:center;font-size:11.5px">Altitude</div>
<div class="t" style="left:392.4px;top:297.5px;width:61.900000000000034px;text-align:center;font-size:11.5px">Azimuth</div>
<div class="t" style="left:454.3px;top:297.5px;width:54.0px;text-align:center;font-size:11.5px">Transit</div>
<div class="t" style="left:508.3px;top:297.5px;width:70.99999999999994px;text-align:center;font-size:11.5px">Transit Alt</div>
<div class="t" style="left:579.3px;top:297.5px;width:51.0px;text-align:center;font-size:11.5px">Moon</div>
<div class="t" style="left:630.3px;top:297.5px;width:69.30000000000007px;text-align:center;font-size:11.5px">Par Angle</div>
<div class="t" style="left:699.6px;top:297.5px;width:72.69999999999993px;text-align:center;font-size:11.5px">RA</div>
<div class="t" style="left:772.3px;top:297.5px;width:57.90000000000009px;text-align:center;font-size:11.5px">Dec</div>
<div class="t" style="left:830.2px;top:297.5px;width:40.19999999999993px;text-align:center;font-size:11.5px">Const</div>
<svg class="a" style="left:171px;top:299px" width="8" height="6"><path d="M0.5 5.5 L4 1.5 L7.5 5.5Z" fill="#a8a8a8"/></svg>
<div class="t" style="left:21.2px;top:316.5px;font-size:11px;color:#fff;transform:scaleX(0.92);transform-origin:0 0;">AG DRA</div>
<div class="t" style="left:136px;top:316.5px;font-size:11px;color:#fff;">0</div>
<div class="t" style="left:189px;top:316.5px;font-size:11px;color:#fff;">30</div>
<div class="a" style="left:264.3px;top:313.7px;width:11.5px;height:14px;border:1.6px solid #000;border-radius:3px;background:#0078d7"></div>
<div class="t" style="left:264.3px;top:316.3px;width:11.5px;text-align:center;font-size:11px;color:#fff">1</div>
<div class="t" style="left:288.5px;top:316.5px;width:43.30000000000001px;text-align:center;font-size:11px;color:#fff">9.7</div>
<div class="t" style="left:331.8px;top:316.5px;width:60.599999999999966px;text-align:center;font-size:11px;color:#fff">45°</div>
<div class="t" style="left:392.4px;top:316.5px;width:61.900000000000034px;text-align:center;font-size:11px;color:#fff">34°</div>
<div class="t" style="left:454.3px;top:316.5px;width:54.0px;text-align:center;font-size:11px;color:#fff">04:17</div>
<div class="t" style="left:508.3px;top:316.5px;width:70.99999999999994px;text-align:center;font-size:11px;color:#fff">75°</div>
<div class="t" style="left:579.3px;top:316.5px;width:51.0px;text-align:center;font-size:11px;color:#fff">100°</div>
<div class="t" style="left:630.3px;top:316.5px;width:69.30000000000007px;text-align:center;font-size:11px;color:#fff">-61.6°</div>
<div class="t" style="left:699.6px;top:316.5px;width:72.69999999999993px;text-align:center;font-size:11px;color:#fff">16h 01m 41s</div>
<div class="t" style="left:772.3px;top:316.5px;width:57.90000000000009px;text-align:center;font-size:11px;color:#fff">+66°48.1'</div>
<div class="t" style="left:830.2px;top:316.5px;width:40.19999999999993px;text-align:center;font-size:11px;color:#fff">Dra</div>
<div class="t" style="left:21.2px;top:332.5px;font-size:11px;color:#000;transform:scaleX(0.92);transform-origin:0 0;">T CRB</div>
<div class="t" style="left:136px;top:332.5px;font-size:11px;color:#000;">0</div>
<div class="t" style="left:189px;top:332.5px;font-size:11px;color:#000;">7</div>
<div class="t" style="left:288.5px;top:332.5px;width:43.30000000000001px;text-align:center;font-size:11px;color:#000">10.2</div>
<div class="t" style="left:331.8px;top:332.5px;width:60.599999999999966px;text-align:center;font-size:11px;color:#000">19°</div>
<div class="t" style="left:392.4px;top:332.5px;width:61.900000000000034px;text-align:center;font-size:11px;color:#000">72°</div>
<div class="t" style="left:454.3px;top:332.5px;width:54.0px;text-align:center;font-size:11px;color:#000">04:14</div>
<div class="t" style="left:508.3px;top:332.5px;width:70.99999999999994px;text-align:center;font-size:11px;color:#000">64°</div>
<div class="t" style="left:579.3px;top:332.5px;width:51.0px;text-align:center;font-size:11px;color:#000">134°</div>
<div class="t" style="left:630.3px;top:332.5px;width:69.30000000000007px;text-align:center;font-size:11px;color:#000">-40.9°</div>
<div class="t" style="left:699.6px;top:332.5px;width:72.69999999999993px;text-align:center;font-size:11px;color:#000">15h 59m 30s</div>
<div class="t" style="left:772.3px;top:332.5px;width:57.90000000000009px;text-align:center;font-size:11px;color:#000">+25°55.2'</div>
<div class="t" style="left:830.2px;top:332.5px;width:40.19999999999993px;text-align:center;font-size:11px;color:#000">CrB</div>
<div class="t" style="left:21.2px;top:348.5px;font-size:11px;color:#000;transform:scaleX(0.92);transform-origin:0 0;">RS OPH</div>
<div class="t" style="left:136px;top:348.5px;font-size:11px;color:#000;">0</div>
<div class="t" style="left:189px;top:348.5px;font-size:11px;color:#000;">30</div>
<div class="t" style="left:288.5px;top:348.5px;width:43.30000000000001px;text-align:center;font-size:11px;color:#000">4.3</div>
<div class="t" style="left:331.8px;top:348.5px;width:60.599999999999966px;text-align:center;font-size:11px;color:#000">-23°</div>
<div class="t" style="left:392.4px;top:348.5px;width:61.900000000000034px;text-align:center;font-size:11px;color:#000">70°</div>
<div class="t" style="left:454.3px;top:348.5px;width:54.0px;text-align:center;font-size:11px;color:#000">06:05</div>
<div class="t" style="left:508.3px;top:348.5px;width:70.99999999999994px;text-align:center;font-size:11px;color:#000">32°</div>
<div class="t" style="left:579.3px;top:348.5px;width:51.0px;text-align:center;font-size:11px;color:#000">123°</div>
<div class="t" style="left:630.3px;top:348.5px;width:69.30000000000007px;text-align:center;font-size:11px;color:#000">-36.0°</div>
<div class="t" style="left:699.6px;top:348.5px;width:72.69999999999993px;text-align:center;font-size:11px;color:#000">17h 50m 13s</div>
<div class="t" style="left:772.3px;top:348.5px;width:57.90000000000009px;text-align:center;font-size:11px;color:#000">-06°42.4'</div>
<div class="t" style="left:830.2px;top:348.5px;width:40.19999999999993px;text-align:center;font-size:11px;color:#000">Oph</div>
<div class="t" style="left:21.2px;top:364.5px;font-size:11px;color:#000;transform:scaleX(0.92);transform-origin:0 0;">AX PER</div>
<div class="t" style="left:136px;top:364.5px;font-size:11px;color:#000;">0</div>
<div class="t" style="left:189px;top:364.5px;font-size:11px;color:#000;">8</div>
<div class="a" style="left:264.3px;top:361.7px;width:11.5px;height:14px;border:1.6px solid #000;border-radius:3px;background:#fafafa"></div>
<div class="t" style="left:264.3px;top:364.3px;width:11.5px;text-align:center;font-size:11px;color:#000">1</div>
<div class="t" style="left:288.5px;top:364.5px;width:43.30000000000001px;text-align:center;font-size:11px;color:#000">10.7</div>
<div class="t" style="left:331.8px;top:364.5px;width:60.599999999999966px;text-align:center;font-size:11px;color:#000">26°</div>
<div class="t" style="left:392.4px;top:364.5px;width:61.900000000000034px;text-align:center;font-size:11px;color:#000">327°</div>
<div class="t" style="left:454.3px;top:364.5px;width:54.0px;text-align:center;font-size:11px;color:#000">13:51</div>
<div class="t" style="left:508.3px;top:364.5px;width:70.99999999999994px;text-align:center;font-size:11px;color:#000">87°</div>
<div class="t" style="left:579.3px;top:364.5px;width:51.0px;text-align:center;font-size:11px;color:#000">45°</div>
<div class="t" style="left:630.3px;top:364.5px;width:69.30000000000007px;text-align:center;font-size:11px;color:#000">35.0°</div>
<div class="t" style="left:699.6px;top:364.5px;width:72.69999999999993px;text-align:center;font-size:11px;color:#000">01h 36m 23s</div>
<div class="t" style="left:772.3px;top:364.5px;width:57.90000000000009px;text-align:center;font-size:11px;color:#000">+54°15.0'</div>
<div class="t" style="left:830.2px;top:364.5px;width:40.19999999999993px;text-align:center;font-size:11px;color:#000">Per</div>
<div class="t" style="left:21.2px;top:380.5px;font-size:11px;color:#000;transform:scaleX(0.92);transform-origin:0 0;">V694 MON</div>
<div class="t" style="left:136px;top:380.5px;font-size:11px;color:#000;">0</div>
<div class="t" style="left:189px;top:380.5px;font-size:11px;color:#000;">1</div>
<div class="t" style="left:288.5px;top:380.5px;width:43.30000000000001px;text-align:center;font-size:11px;color:#000">9.7</div>
<div class="t" style="left:331.8px;top:380.5px;width:60.599999999999966px;text-align:center;font-size:11px;color:#000">23°</div>
<div class="t" style="left:392.4px;top:380.5px;width:61.900000000000034px;text-align:center;font-size:11px;color:#000">220°</div>
<div class="t" style="left:454.3px;top:380.5px;width:54.0px;text-align:center;font-size:11px;color:#000">19:41</div>
<div class="t" style="left:508.3px;top:380.5px;width:70.99999999999994px;text-align:center;font-size:11px;color:#000">31°</div>
<div class="t" style="left:579.3px;top:380.5px;width:51.0px;text-align:center;font-size:11px;color:#000">83°</div>
<div class="t" style="left:630.3px;top:380.5px;width:69.30000000000007px;text-align:center;font-size:11px;color:#000">23.5°</div>
<div class="t" style="left:699.6px;top:380.5px;width:72.69999999999993px;text-align:center;font-size:11px;color:#000">07h 25m 51s</div>
<div class="t" style="left:772.3px;top:380.5px;width:57.90000000000009px;text-align:center;font-size:11px;color:#000">-07°44.1'</div>
<div class="t" style="left:830.2px;top:380.5px;width:40.19999999999993px;text-align:center;font-size:11px;color:#000">Mon</div>
<div class="t" style="left:21.2px;top:396.5px;font-size:11px;color:#000;transform:scaleX(0.92);transform-origin:0 0;">R AQR</div>
<div class="t" style="left:136px;top:396.5px;font-size:11px;color:#000;">0</div>
<div class="t" style="left:189px;top:396.5px;font-size:11px;color:#000;">8</div>
<div class="t" style="left:288.5px;top:396.5px;width:43.30000000000001px;text-align:center;font-size:11px;color:#000">7.7</div>
<div class="t" style="left:331.8px;top:396.5px;width:60.599999999999966px;text-align:center;font-size:11px;color:#000">-47°</div>
<div class="t" style="left:392.4px;top:396.5px;width:61.900000000000034px;text-align:center;font-size:11px;color:#000">318°</div>
<div class="t" style="left:454.3px;top:396.5px;width:54.0px;text-align:center;font-size:11px;color:#000">11:59</div>
<div class="t" style="left:508.3px;top:396.5px;width:70.99999999999994px;text-align:center;font-size:11px;color:#000">23°</div>
<div class="t" style="left:579.3px;top:396.5px;width:51.0px;text-align:center;font-size:11px;color:#000">42°</div>
<div class="t" style="left:630.3px;top:396.5px;width:69.30000000000007px;text-align:center;font-size:11px;color:#000">25.6°</div>
<div class="t" style="left:699.6px;top:396.5px;width:72.69999999999993px;text-align:center;font-size:11px;color:#000">23h 43m 49s</div>
<div class="t" style="left:772.3px;top:396.5px;width:57.90000000000009px;text-align:center;font-size:11px;color:#000">-15°17.0'</div>
<div class="t" style="left:830.2px;top:396.5px;width:40.19999999999993px;text-align:center;font-size:11px;color:#000">Aqr</div>
<div class="t" style="left:21.2px;top:412.5px;font-size:11px;color:#000;transform:scaleX(0.92);transform-origin:0 0;">QW SGE</div>
<div class="t" style="left:288.5px;top:412.5px;width:43.30000000000001px;text-align:center;font-size:11px;color:#000">12.5</div>
<div class="t" style="left:331.8px;top:412.5px;width:60.599999999999966px;text-align:center;font-size:11px;color:#000">-15°</div>
<div class="t" style="left:392.4px;top:412.5px;width:61.900000000000034px;text-align:center;font-size:11px;color:#000">31°</div>
<div class="t" style="left:454.3px;top:412.5px;width:54.0px;text-align:center;font-size:11px;color:#000">08:01</div>
<div class="t" style="left:508.3px;top:412.5px;width:70.99999999999994px;text-align:center;font-size:11px;color:#000">57°</div>
<div class="t" style="left:579.3px;top:412.5px;width:51.0px;text-align:center;font-size:11px;color:#000">90°</div>
<div class="t" style="left:630.3px;top:412.5px;width:69.30000000000007px;text-align:center;font-size:11px;color:#000">-19.5°</div>
<div class="t" style="left:699.6px;top:412.5px;width:72.69999999999993px;text-align:center;font-size:11px;color:#000">19h 45m 50s</div>
<div class="t" style="left:772.3px;top:412.5px;width:57.90000000000009px;text-align:center;font-size:11px;color:#000">+18°36.7'</div>
<div class="t" style="left:830.2px;top:412.5px;width:40.19999999999993px;text-align:center;font-size:11px;color:#000">Sge</div>
<div class="t" style="left:21.2px;top:428.5px;font-size:11px;color:#000;transform:scaleX(0.92);transform-origin:0 0;">FG SER</div>
<div class="t" style="left:288.5px;top:428.5px;width:43.30000000000001px;text-align:center;font-size:11px;color:#000">11.9</div>
<div class="t" style="left:331.8px;top:428.5px;width:60.599999999999966px;text-align:center;font-size:11px;color:#000">-22°</div>
<div class="t" style="left:392.4px;top:428.5px;width:61.900000000000034px;text-align:center;font-size:11px;color:#000">61°</div>
<div class="t" style="left:454.3px;top:428.5px;width:54.0px;text-align:center;font-size:11px;color:#000">06:30</div>
<div class="t" style="left:508.3px;top:428.5px;width:70.99999999999994px;text-align:center;font-size:11px;color:#000">38°</div>
<div class="t" style="left:579.3px;top:428.5px;width:51.0px;text-align:center;font-size:11px;color:#000">116°</div>
<div class="t" style="left:630.3px;top:428.5px;width:69.30000000000007px;text-align:center;font-size:11px;color:#000">-32.7°</div>
<div class="t" style="left:699.6px;top:428.5px;width:72.69999999999993px;text-align:center;font-size:11px;color:#000">18h 15m 07s</div>
<div class="t" style="left:772.3px;top:428.5px;width:57.90000000000009px;text-align:center;font-size:11px;color:#000">-00°18.8'</div>
<div class="t" style="left:830.2px;top:428.5px;width:40.19999999999993px;text-align:center;font-size:11px;color:#000">Ser</div>
<div class="t" style="left:21.2px;top:444.5px;font-size:11px;color:#000;transform:scaleX(0.92);transform-origin:0 0;">V426 SGE</div>
<div class="t" style="left:87px;top:444.5px;font-size:11px;color:#000;">HbHa ...</div>
<div class="t" style="left:288.5px;top:444.5px;width:43.30000000000001px;text-align:center;font-size:11px;color:#000">12.5</div>
<div class="t" style="left:331.8px;top:444.5px;width:60.599999999999966px;text-align:center;font-size:11px;color:#000">-16°</div>
<div class="t" style="left:392.4px;top:444.5px;width:61.900000000000034px;text-align:center;font-size:11px;color:#000">29°</div>
<div class="t" style="left:454.3px;top:444.5px;width:54.0px;text-align:center;font-size:11px;color:#000">08:10</div>
<div class="t" style="left:508.3px;top:444.5px;width:70.99999999999994px;text-align:center;font-size:11px;color:#000">56°</div>
<div class="t" style="left:579.3px;top:444.5px;width:51.0px;text-align:center;font-size:11px;color:#000">88°</div>
<div class="t" style="left:630.3px;top:444.5px;width:69.30000000000007px;text-align:center;font-size:11px;color:#000">-18.3°</div>
<div class="t" style="left:699.6px;top:444.5px;width:72.69999999999993px;text-align:center;font-size:11px;color:#000">19h 54m 43s</div>
<div class="t" style="left:772.3px;top:444.5px;width:57.90000000000009px;text-align:center;font-size:11px;color:#000">+17°22.2'</div>
<div class="t" style="left:830.2px;top:444.5px;width:40.19999999999993px;text-align:center;font-size:11px;color:#000">Sge</div>
<div class="t" style="left:21.2px;top:460.5px;font-size:11px;color:#000;transform:scaleX(0.92);transform-origin:0 0;">STHA 169</div>
<div class="t" style="left:288.5px;top:460.5px;width:43.30000000000001px;text-align:center;font-size:11px;color:#000">13.4</div>
<div class="t" style="left:331.8px;top:460.5px;width:60.599999999999966px;text-align:center;font-size:11px;color:#000">11°</div>
<div class="t" style="left:392.4px;top:460.5px;width:61.900000000000034px;text-align:center;font-size:11px;color:#000">21°</div>
<div class="t" style="left:454.3px;top:460.5px;width:54.0px;text-align:center;font-size:11px;color:#000">08:05</div>
<div class="t" style="left:508.3px;top:460.5px;width:70.99999999999994px;text-align:center;font-size:11px;color:#000">85°</div>
<div class="t" style="left:579.3px;top:460.5px;width:51.0px;text-align:center;font-size:11px;color:#000">85°</div>
<div class="t" style="left:630.3px;top:460.5px;width:69.30000000000007px;text-align:center;font-size:11px;color:#000">-18.6°</div>
<div class="t" style="left:699.6px;top:460.5px;width:72.69999999999993px;text-align:center;font-size:11px;color:#000">19h 49m 58s</div>
<div class="t" style="left:772.3px;top:460.5px;width:57.90000000000009px;text-align:center;font-size:11px;color:#000">+46°15.3'</div>
<div class="t" style="left:830.2px;top:460.5px;width:40.19999999999993px;text-align:center;font-size:11px;color:#000">Cyg</div>
<div class="t" style="left:21.2px;top:476.5px;font-size:11px;color:#000;transform:scaleX(0.92);transform-origin:0 0;">STHA 149</div>
<div class="t" style="left:189px;top:476.5px;font-size:11px;color:#000;">30</div>
<div class="t" style="left:288.5px;top:476.5px;width:43.30000000000001px;text-align:center;font-size:11px;color:#000">12.0</div>
<div class="t" style="left:331.8px;top:476.5px;width:60.599999999999966px;text-align:center;font-size:11px;color:#000">2°</div>
<div class="t" style="left:392.4px;top:476.5px;width:61.900000000000034px;text-align:center;font-size:11px;color:#000">45°</div>
<div class="t" style="left:454.3px;top:476.5px;width:54.0px;text-align:center;font-size:11px;color:#000">06:34</div>
<div class="t" style="left:508.3px;top:476.5px;width:70.99999999999994px;text-align:center;font-size:11px;color:#000">66°</div>
<div class="t" style="left:579.3px;top:476.5px;width:51.0px;text-align:center;font-size:11px;color:#000">107°</div>
<div class="t" style="left:630.3px;top:476.5px;width:69.30000000000007px;text-align:center;font-size:11px;color:#000">-29.7°</div>
<div class="t" style="left:699.6px;top:476.5px;width:72.69999999999993px;text-align:center;font-size:11px;color:#000">18h 18m 56s</div>
<div class="t" style="left:772.3px;top:476.5px;width:57.90000000000009px;text-align:center;font-size:11px;color:#000">+27°26.4'</div>
<div class="t" style="left:830.2px;top:476.5px;width:40.19999999999993px;text-align:center;font-size:11px;color:#000">Her</div>
<div class="t" style="left:21.2px;top:492.5px;font-size:11px;color:#000;transform:scaleX(0.92);transform-origin:0 0;">V335 VUL</div>
<div class="t" style="left:288.5px;top:492.5px;width:43.30000000000001px;text-align:center;font-size:11px;color:#000">13.6</div>
<div class="t" style="left:331.8px;top:492.5px;width:60.599999999999966px;text-align:center;font-size:11px;color:#000">-7°</div>
<div class="t" style="left:392.4px;top:492.5px;width:61.900000000000034px;text-align:center;font-size:11px;color:#000">34°</div>
<div class="t" style="left:454.3px;top:492.5px;width:54.0px;text-align:center;font-size:11px;color:#000">07:38</div>
<div class="t" style="left:508.3px;top:492.5px;width:70.99999999999994px;text-align:center;font-size:11px;color:#000">63°</div>
<div class="t" style="left:579.3px;top:492.5px;width:51.0px;text-align:center;font-size:11px;color:#000">94°</div>
<div class="t" style="left:630.3px;top:492.5px;width:69.30000000000007px;text-align:center;font-size:11px;color:#000">-22.1°</div>
<div class="t" style="left:699.6px;top:492.5px;width:72.69999999999993px;text-align:center;font-size:11px;color:#000">19h 23m 14s</div>
<div class="t" style="left:772.3px;top:492.5px;width:57.90000000000009px;text-align:center;font-size:11px;color:#000">+24°27.6'</div>
<div class="t" style="left:830.2px;top:492.5px;width:40.19999999999993px;text-align:center;font-size:11px;color:#000">Vul</div>
<div class="t" style="left:21.2px;top:508.5px;font-size:11px;color:#000;transform:scaleX(0.92);transform-origin:0 0;">HEN 2-468</div>
<div class="t" style="left:288.5px;top:508.5px;width:43.30000000000001px;text-align:center;font-size:11px;color:#000">14.0</div>
<div class="t" style="left:331.8px;top:508.5px;width:60.599999999999966px;text-align:center;font-size:11px;color:#000">-2°</div>
<div class="t" style="left:392.4px;top:508.5px;width:61.900000000000034px;text-align:center;font-size:11px;color:#000">14°</div>
<div class="t" style="left:454.3px;top:508.5px;width:54.0px;text-align:center;font-size:11px;color:#000">08:56</div>
<div class="t" style="left:508.3px;top:508.5px;width:70.99999999999994px;text-align:center;font-size:11px;color:#000">73°</div>
<div class="t" style="left:579.3px;top:508.5px;width:51.0px;text-align:center;font-size:11px;color:#000">76°</div>
<div class="t" style="left:630.3px;top:508.5px;width:69.30000000000007px;text-align:center;font-size:11px;color:#000">-10.7°</div>
<div class="t" style="left:699.6px;top:508.5px;width:72.69999999999993px;text-align:center;font-size:11px;color:#000">20h 41m 19s</div>
<div class="t" style="left:772.3px;top:508.5px;width:57.90000000000009px;text-align:center;font-size:11px;color:#000">+34°44.8'</div>
<div class="t" style="left:830.2px;top:508.5px;width:40.19999999999993px;text-align:center;font-size:11px;color:#000">Cyg</div>
<div class="t" style="left:21.2px;top:524.5px;font-size:11px;color:#000;transform:scaleX(0.92);transform-origin:0 0;">AS 289</div>
<div class="t" style="left:288.5px;top:524.5px;width:43.30000000000001px;text-align:center;font-size:11px;color:#000">12.4</div>
<div class="t" style="left:331.8px;top:524.5px;width:60.599999999999966px;text-align:center;font-size:11px;color:#000">-31°</div>
<div class="t" style="left:392.4px;top:524.5px;width:61.900000000000034px;text-align:center;font-size:11px;color:#000">68°</div>
<div class="t" style="left:454.3px;top:524.5px;width:54.0px;text-align:center;font-size:11px;color:#000">06:27</div>
<div class="t" style="left:508.3px;top:524.5px;width:70.99999999999994px;text-align:center;font-size:11px;color:#000">27°</div>
<div class="t" style="left:579.3px;top:524.5px;width:51.0px;text-align:center;font-size:11px;color:#000">118°</div>
<div class="t" style="left:630.3px;top:524.5px;width:69.30000000000007px;text-align:center;font-size:11px;color:#000">-36.1°</div>
<div class="t" style="left:699.6px;top:524.5px;width:72.69999999999993px;text-align:center;font-size:11px;color:#000">18h 12m 22s</div>
<div class="t" style="left:772.3px;top:524.5px;width:57.90000000000009px;text-align:center;font-size:11px;color:#000">-11°40.1'</div>
<div class="t" style="left:830.2px;top:524.5px;width:40.19999999999993px;text-align:center;font-size:11px;color:#000">Ser</div>
<div class="a" style="left:1169px;top:313px;width:17px;height:227px;background:#f0f0f0"></div>
<div class="a" style="left:1170px;top:330px;width:15px;height:48px;background:#cdcdcd"></div>
<svg class="a" style="left:1172px;top:317px" width="11" height="8"><path d="M1 6 L5.5 1.5 L10 6" fill="none" stroke="#505050" stroke-width="1.2"/></svg>
<svg class="a" style="left:1172px;top:528px" width="11" height="8"><path d="M1 2 L5.5 6.5 L10 2" fill="none" stroke="#505050" stroke-width="1.2"/></svg>
<!--/table-->
<!--sky-->
<svg class="a" style="left:1195px;top:293px;font-family:'Liberation Sans'" width="151" height="151" viewBox="0 0 151 151"><rect width="151" height="151" fill="#000"/><polygon points="97,19.3 121,7.8 123.6,38.7 143.5,42.9 137.7,54.4 145.6,58 133.5,76 126.2,83.4 129.4,85 122,90.2 117,101 126.2,114.2 109,122 109.5,127.3 98,129.4 97.5,132 75,137.7 68,138.8 66.9,141.4 46,138.8 32.4,135.6 30.3,144 6.3,133 19.3,114.2 13.1,109 15.7,102.7 10.5,98.5 13.6,95.4 9.4,91.7 14.1,87 7.3,80.7 13.6,76 19.3,72.1 17.2,67.4 36.1,54.4 40.2,60.1 51.2,50.2 48.6,46 62.7,36.6 69.5,42.9 66.1,52 64.9,59.8 67.3,60.3 64.9,73.9 75.2,74.7 76.4,88.7 87.6,86.3 89.6,96.6 99.5,93.3 107,90 114.8,84.2 109.5,74.3 119.4,65.6 103.7,53.3 110,39.2 102.2,37.1 102.7,31.4 96.4,30.3" fill="none" stroke="#5c5c5c" stroke-width="1.1" stroke-linejoin="miter"/><path d="M35.5,83.4 L47.6,120 L42.3,134.1" fill="none" stroke="#7c7c12" stroke-width="0.9"/><path d="M47.6,120 L54.4,126.2" fill="none" stroke="#7c7c12" stroke-width="0.9"/><path d="M32.4,72.1 L43.4,70.6 L52.3,75.3 L60.6,79.5 L65.3,98.5 L79.7,109.5 L87.5,116.3 L100.4,112.1 L108.4,99.6 L116.3,86.5 L122,57.5 L130.4,41.3" fill="none" stroke="#7c7c12" stroke-width="0.9"/><circle cx="69.7" cy="85.0" r="0.8" fill="#fff"/><circle cx="69.6" cy="127.3" r="0.65" fill="#fff"/><circle cx="31.4" cy="78.2" r="0.65" fill="#fff"/><circle cx="18.0" cy="120.8" r="0.6" fill="#fff"/><circle cx="69.8" cy="110.7" r="0.65" fill="#fff"/><circle cx="94.1" cy="123.9" r="0.6" fill="#fff"/><circle cx="125.5" cy="79.2" r="0.7" fill="#fff"/><circle cx="76.5" cy="99.7" r="0.8" fill="#fff"/><circle cx="113.4" cy="78.3" r="0.6" fill="#fff"/><circle cx="62.3" cy="126.1" r="0.8" fill="#fff"/><circle cx="102.9" cy="35.5" r="0.6" fill="#fff"/><circle cx="95.0" cy="116.3" r="0.7" fill="#fff"/><circle cx="53.2" cy="49.5" r="0.6" fill="#fff"/><circle cx="119.0" cy="30.4" r="0.65" fill="#fff"/><circle cx="109.7" cy="23.7" r="0.8" fill="#fff"/><circle cx="21.7" cy="65.2" r="0.65" fill="#fff"/><circle cx="92.3" cy="123.7" r="0.8" fill="#fff"/><circle cx="74.2" cy="87.2" r="0.8" fill="#fff"/><circle cx="39.1" cy="105.8" r="0.7" fill="#fff"/><circle cx="65.2" cy="134.4" r="0.8" fill="#fff"/><circle cx="108.0" cy="14.8" r="0.65" fill="#fff"/><circle cx="73.5" cy="98.5" r="0.6" fill="#fff"/><circle cx="45.1" cy="136.2" r="0.65" fill="#fff"/><circle cx="112.1" cy="14.9" r="0.8" fill="#fff"/><circle cx="56.8" cy="132.4" r="0.7" fill="#fff"/><circle cx="98.9" cy="103.8" r="0.65" fill="#fff"/><circle cx="110.4" cy="23.5" r="0.7" fill="#fff"/><circle cx="55.3" cy="103.0" r="0.6" fill="#fff"/><circle cx="129.6" cy="64.7" r="0.6" fill="#fff"/><circle cx="88.3" cy="92.1" r="0.6" fill="#fff"/><circle cx="41.8" cy="64.5" r="0.7" fill="#fff"/><circle cx="60.5" cy="110.1" r="0.8" fill="#fff"/><circle cx="68.0" cy="124.9" r="0.6" fill="#fff"/><circle cx="21.1" cy="116.5" r="0.8" fill="#fff"/><circle cx="48.0" cy="102.0" r="0.65" fill="#fff"/><circle cx="79.1" cy="112.8" r="0.7" fill="#fff"/><circle cx="132.5" cy="51.8" r="0.7" fill="#fff"/><circle cx="33.4" cy="66.6" r="0.65" fill="#fff"/><circle cx="130.9" cy="60.0" r="0.7" fill="#fff"/><circle cx="55.2" cy="133.1" r="0.6" fill="#fff"/><circle cx="35.6" cy="64.2" r="0.8" fill="#fff"/><circle cx="101.1" cy="107.4" r="0.8" fill="#fff"/><circle cx="50.8" cy="123.5" r="0.7" fill="#fff"/><circle cx="49.2" cy="118.2" r="0.6" fill="#fff"/><circle cx="32.2" cy="115.0" r="0.7" fill="#fff"/><circle cx="68.8" cy="95.1" r="0.7" fill="#fff"/><circle cx="33.5" cy="72.9" r="0.65" fill="#fff"/><circle cx="107.1" cy="113.0" r="0.6" fill="#fff"/><circle cx="54.4" cy="104.7" r="0.65" fill="#fff"/><circle cx="61.3" cy="118.2" r="0.65" fill="#fff"/><circle cx="108.3" cy="23.6" r="0.8" fill="#fff"/><circle cx="33.2" cy="131.9" r="0.6" fill="#fff"/><circle cx="58.9" cy="86.3" r="0.7" fill="#fff"/><circle cx="71.3" cy="98.1" r="0.65" fill="#fff"/><circle cx="19.2" cy="128.9" r="0.6" fill="#fff"/><circle cx="35.5" cy="133.7" r="0.6" fill="#fff"/><circle cx="118.1" cy="50.8" r="0.6" fill="#fff"/><circle cx="68.0" cy="83.7" r="0.7" fill="#fff"/><circle cx="120.7" cy="14.2" r="0.6" fill="#fff"/><circle cx="117.7" cy="25.1" r="0.65" fill="#fff"/><circle cx="79.1" cy="101.9" r="0.8" fill="#fff"/><circle cx="36.7" cy="80.3" r="0.7" fill="#fff"/><circle cx="123.9" cy="85.3" r="0.65" fill="#fff"/><circle cx="79.8" cy="125.6" r="0.7" fill="#fff"/><circle cx="49.6" cy="59.5" r="0.65" fill="#fff"/><circle cx="58.9" cy="82.0" r="0.6" fill="#fff"/><circle cx="119.6" cy="85.5" r="0.8" fill="#fff"/><circle cx="62.8" cy="40.2" r="0.8" fill="#fff"/><circle cx="23.2" cy="67.0" r="0.8" fill="#fff"/><circle cx="42.2" cy="105.4" r="0.6" fill="#fff"/><circle cx="88.3" cy="126.8" r="0.7" fill="#fff"/><circle cx="107.6" cy="105.3" r="0.8" fill="#fff"/><circle cx="82.0" cy="128.5" r="0.65" fill="#fff"/><circle cx="80.7" cy="126.7" r="0.65" fill="#fff"/><circle cx="38.3" cy="110.9" r="0.7" fill="#fff"/><circle cx="134.1" cy="50.2" r="0.7" fill="#fff"/><circle cx="116.3" cy="32.8" r="0.6" fill="#fff"/><circle cx="108.9" cy="42.1" r="0.6" fill="#fff"/><circle cx="67.2" cy="139.6" r="0.65" fill="#fff"/><circle cx="33.7" cy="94.8" r="0.6" fill="#fff"/><circle cx="18.7" cy="86.5" r="0.7" fill="#fff"/><circle cx="21.5" cy="77.3" r="0.7" fill="#fff"/><circle cx="76.9" cy="103.1" r="0.65" fill="#fff"/><circle cx="119.8" cy="73.9" r="0.6" fill="#fff"/><circle cx="34.2" cy="125.2" r="0.7" fill="#fff"/><circle cx="71.1" cy="114.4" r="0.7" fill="#fff"/><circle cx="60.9" cy="66.0" r="0.7" fill="#fff"/><circle cx="66.5" cy="90.9" r="0.6" fill="#fff"/><circle cx="33.6" cy="63.3" r="0.7" fill="#fff"/><circle cx="41.9" cy="135.3" r="0.65" fill="#fff"/><circle cx="121.5" cy="63.0" r="0.7" fill="#fff"/><circle cx="114.7" cy="114.4" r="0.8" fill="#fff"/><circle cx="119.0" cy="48.1" r="0.6" fill="#fff"/><circle cx="105.3" cy="113.9" r="0.6" fill="#fff"/><circle cx="38.9" cy="68.4" r="0.6" fill="#fff"/><circle cx="113.9" cy="97.7" r="0.6" fill="#fff"/><circle cx="96.2" cy="120.8" r="0.6" fill="#fff"/><circle cx="83.6" cy="100.6" r="0.6" fill="#fff"/><circle cx="60.3" cy="139.2" r="0.8" fill="#fff"/><circle cx="75.9" cy="92.4" r="0.6" fill="#fff"/><circle cx="66.4" cy="75.7" r="0.7" fill="#fff"/><circle cx="80.3" cy="90.5" r="0.7" fill="#fff"/><circle cx="43.6" cy="137.9" r="0.7" fill="#fff"/><circle cx="88.8" cy="95.5" r="0.8" fill="#fff"/><circle cx="134.5" cy="66.4" r="0.8" fill="#fff"/><circle cx="40.9" cy="113.0" r="0.6" fill="#fff"/><circle cx="68.3" cy="100.5" r="0.8" fill="#fff"/><circle cx="91.0" cy="96.5" r="0.8" fill="#fff"/><circle cx="57.1" cy="111.4" r="0.65" fill="#fff"/><circle cx="43.8" cy="103.0" r="0.65" fill="#fff"/><circle cx="95.5" cy="112.7" r="0.65" fill="#fff"/><circle cx="102.7" cy="94.9" r="0.6" fill="#fff"/><circle cx="43.7" cy="65.8" r="0.6" fill="#fff"/><circle cx="19.7" cy="82.5" r="0.6" fill="#fff"/><circle cx="55.6" cy="53.4" r="0.8" fill="#fff"/><circle cx="114.9" cy="35.5" r="0.8" fill="#fff"/><circle cx="46.6" cy="113.5" r="0.65" fill="#fff"/><circle cx="18.9" cy="130.2" r="0.6" fill="#fff"/><circle cx="86.2" cy="121.6" r="0.8" fill="#fff"/><circle cx="47.7" cy="115.9" r="0.6" fill="#fff"/><circle cx="49.4" cy="135.2" r="0.6" fill="#fff"/><circle cx="114.3" cy="51.9" r="0.65" fill="#fff"/><circle cx="36.3" cy="99.0" r="0.7" fill="#fff"/><circle cx="135.6" cy="67.6" r="0.7" fill="#fff"/><circle cx="118.8" cy="110.7" r="0.7" fill="#fff"/><circle cx="119.0" cy="82.3" r="0.65" fill="#fff"/><circle cx="30.3" cy="113.5" r="0.7" fill="#fff"/><circle cx="121.1" cy="36.6" r="0.6" fill="#fff"/><circle cx="120.0" cy="14.2" r="0.7" fill="#fff"/><circle cx="117.7" cy="17.0" r="0.6" fill="#fff"/><circle cx="98.5" cy="18.9" r="0.8" fill="#fff"/><circle cx="114.4" cy="79.6" r="0.8" fill="#fff"/><circle cx="61.4" cy="53.3" r="0.7" fill="#fff"/><circle cx="81.8" cy="108.1" r="0.6" fill="#fff"/><circle cx="63.7" cy="123.2" r="0.7" fill="#fff"/><circle cx="79.9" cy="106.5" r="0.6" fill="#fff"/><circle cx="65.3" cy="65.1" r="0.65" fill="#fff"/><circle cx="95.8" cy="102.8" r="0.7" fill="#fff"/><circle cx="34.2" cy="65.8" r="0.7" fill="#fff"/><circle cx="44.2" cy="131.7" r="0.8" fill="#fff"/><circle cx="97.7" cy="116.0" r="0.65" fill="#fff"/><circle cx="119.5" cy="49.7" r="0.65" fill="#fff"/><circle cx="38.7" cy="107.6" r="0.65" fill="#fff"/><circle cx="68.2" cy="132.9" r="0.8" fill="#fff"/><circle cx="29.7" cy="113.3" r="0.7" fill="#fff"/><circle cx="83.7" cy="127.0" r="0.8" fill="#fff"/><circle cx="53.9" cy="83.3" r="0.6" fill="#fff"/><circle cx="119.6" cy="60.1" r="0.7" fill="#fff"/><circle cx="117.6" cy="13.3" r="0.65" fill="#fff"/><circle cx="134.4" cy="69.4" r="0.65" fill="#fff"/><circle cx="107.0" cy="91.7" r="0.65" fill="#fff"/><circle cx="64.5" cy="115.4" r="0.65" fill="#fff"/><circle cx="42.1" cy="129.3" r="0.65" fill="#fff"/><circle cx="43.1" cy="81.4" r="0.65" fill="#fff"/><circle cx="34.2" cy="136.0" r="0.65" fill="#fff"/><circle cx="43.6" cy="107.5" r="0.6" fill="#fff"/><circle cx="16.8" cy="112.0" r="0.7" fill="#fff"/><circle cx="32.6" cy="102.6" r="0.8" fill="#fff"/><circle cx="34.8" cy="82.7" r="0.8" fill="#fff"/><circle cx="27.5" cy="124.0" r="0.7" fill="#fff"/><circle cx="50.2" cy="63.0" r="0.7" fill="#fff"/><circle cx="25.1" cy="100.5" r="0.8" fill="#fff"/><circle cx="111.8" cy="117.2" r="0.6" fill="#fff"/><circle cx="58.9" cy="106.5" r="0.65" fill="#fff"/><circle cx="72.2" cy="96.6" r="0.8" fill="#fff"/><circle cx="101.9" cy="106.3" r="0.65" fill="#fff"/><circle cx="71.2" cy="105.7" r="0.6" fill="#fff"/><circle cx="15.4" cy="136.6" r="0.8" fill="#fff"/><circle cx="109.0" cy="92.7" r="0.7" fill="#fff"/><circle cx="53.9" cy="98.1" r="0.6" fill="#fff"/><circle cx="32.4" cy="72.1" r="2.2" fill="#fff"/><circle cx="43.4" cy="70.6" r="1.6" fill="#fff"/><circle cx="52.3" cy="75.3" r="2" fill="#fff"/><circle cx="95.4" cy="20.4" r="1.5" fill="#fff"/><circle cx="113.5" cy="26.7" r="1.5" fill="#fff"/><circle cx="130.4" cy="41.3" r="2.2" fill="#fff"/><circle cx="122" cy="57.5" r="1.8" fill="#fff"/><circle cx="35.5" cy="83.4" r="2.5" fill="#fff"/><circle cx="30.3" cy="86.5" r="1.6" fill="#fff"/><circle cx="52.3" cy="76.6" r="2.3" fill="#fff"/><circle cx="44.4" cy="77.1" r="1.5" fill="#fff"/><circle cx="51.2" cy="80.2" r="1.3" fill="#fff"/><circle cx="65.3" cy="98.5" r="2.5" fill="#fff"/><circle cx="73.2" cy="101.7" r="1.6" fill="#fff"/><circle cx="20.4" cy="106.4" r="1.5" fill="#fff"/><circle cx="30.3" cy="106.4" r="1.5" fill="#fff"/><circle cx="38.5" cy="111.6" r="1.4" fill="#fff"/><circle cx="33.5" cy="115.2" r="1.5" fill="#fff"/><circle cx="47.6" cy="120" r="2.3" fill="#fff"/><circle cx="54.4" cy="126.2" r="1.5" fill="#fff"/><circle cx="42.3" cy="134.1" r="3.4" fill="#fff"/><circle cx="54.4" cy="134.1" r="3.4" fill="#fff"/><circle cx="17.8" cy="128.3" r="1.4" fill="#fff"/><circle cx="72.4" cy="123.3" r="1.5" fill="#fff"/><circle cx="59.6" cy="89.6" r="1.3" fill="#fff"/><circle cx="116.3" cy="86.5" r="2.5" fill="#fff"/><circle cx="120" cy="83.4" r="1.5" fill="#fff"/><circle cx="79.7" cy="109.5" r="3.4" fill="#fff"/><circle cx="100.4" cy="112.1" r="2.5" fill="#fff"/><circle cx="87.5" cy="116.3" r="1.4" fill="#fff"/><circle cx="91.2" cy="126.2" r="1.6" fill="#fff"/><circle cx="82.6" cy="93.7" r="2.8" fill="none" stroke="#ff1010" stroke-width="1.2"/><text x="90.7" y="100.1" font-size="12.5" fill="#ff1010" textLength="41.3" lengthAdjust="spacingAndGlyphs">AG DRA</text><text x="126.7" y="19.9" font-size="11.5" fill="#6a6a6a" textLength="16.8" lengthAdjust="spacingAndGlyphs">Dra</text></svg>
<div class="dd" style="left:1195px;top:521px;width:151px;height:20px"></div>
<div class="t" style="left:1199px;top:525.5px;font-size:11px">Constellation: Draco</div>
<div class="chev" style="left:1332px;top:526px"></div>
<!--/sky-->
<!--bottom-->
<div class="a" style="left:9px;top:551px;width:22px;height:22px;background:#e1e1e1;border:1px solid #adadad"></div>
<div class="a" style="left:35px;top:551px;width:22px;height:22px;background:#e1e1e1;border:1px solid #adadad"></div>
<div class="a" style="left:61px;top:551px;width:22px;height:22px;background:#e1e1e1;border:1px solid #adadad"></div>
<div class="a" style="left:87px;top:551px;width:22px;height:22px;background:#cce4f7;border:1px solid #0050b4"></div>
<div class="a" style="left:117px;top:551px;width:22px;height:22px;background:#e1e1e1;border:1px solid #adadad"></div>
<svg class="a" style="left:9px;top:551px" width="22" height="22"><path d="M4.8 10.8H17.2M11 4.6V17" stroke="#000" stroke-width="2"/></svg>
<svg class="a" style="left:35px;top:551px" width="22" height="22"><path d="M4 10.8H17.6" stroke="#000" stroke-width="2"/></svg>
<svg class="a" style="left:61px;top:551px" width="22" height="22"><path d="M7.5 4.6H16.2Q17.4 4.6 17.4 5.8V14" fill="none" stroke="#000" stroke-width="1.4"/><rect x="4" y="7.3" width="10.8" height="10.2" rx="1.5" fill="#000"/><path d="M9.4 9.8V15M6.8 12.4H12" stroke="#fff" stroke-width="1.3"/></svg>
<svg class="a" style="left:87px;top:551px" width="22" height="22"><path d="M4.5 17.5 L5.8 12.8 L14.8 3.8 Q16 3 17.2 4.2 L17.8 4.8 Q18.8 6 18 7 L9 16 Z" fill="#000"/><path d="M6.4 15.9 L6.9 14 L8 15.2Z" fill="#cce4f7"/><path d="M13.6 5.2 L16.6 8.2" stroke="#cce4f7" stroke-width="0.9"/></svg>
<svg class="a" style="left:117px;top:551px" width="22" height="22" viewBox="0 0 22 22"><g transform="translate(10.8 10.9)"><path d="M-1.6 -7.6 H1.6 L2 -5.3 L3.6 -4.6 L5.5 -6 L7.8 -3.7 L6.4 -1.8 L7 -0.2 L-7 -0.2Z" fill="#000"/><path d="M-1.6 -7.6 H1.6 L2 -5.3 Q3 -5 3.8 -4.4 L5.6 -5.7 L7.7 -3.6 L6.4 -1.8 Q6.9 -1 7.1 0 L7.6 1.6 V-1.6" fill="#000"/></g><g transform="translate(10.8 10.9)" fill="#000"><circle r="5.4"/><rect x="-1.7" y="-7.6" width="3.4" height="15.2"/><rect x="-7.6" y="-1.7" width="15.2" height="3.4"/><rect x="-1.7" y="-7.6" width="3.4" height="15.2" transform="rotate(45)"/><rect x="-7.6" y="-1.7" width="15.2" height="3.4" transform="rotate(45)"/></g><circle cx="10.8" cy="10.9" r="2.3" fill="#e1e1e1"/></svg>
<div class="a" style="left:147px;top:551px;width:64.69999999999999px;height:22px;background:#e1e1e1;border:1px solid #adadad"></div>
<div class="t" style="left:152.7px;top:557.8px;font-size:11.4px;color:#000">Quick Obs</div>
<div class="a" style="left:222.1px;top:551px;width:104.4px;height:22px;background:#e1e1e1;border:1px solid #adadad"></div>
<div class="t" style="left:229.5px;top:557.8px;font-size:11.4px;color:#000">New Observation</div>
<div class="a" style="left:338.3px;top:551px;width:57.099999999999966px;height:22px;background:#e1e1e1;border:1px solid #adadad"></div>
<div class="t" style="left:346.8px;top:557.8px;font-size:11.4px;color:#000">Lookup</div>
<svg class="a" style="left:387px;top:559px" width="5" height="9"><path d="M0.2 0.8 L4.5 4.5 L0.2 8.2Z" fill="#000"/></svg>
<div class="a" style="left:407.2px;top:551px;width:102.10000000000002px;height:22px;background:#e1e1e1;border:1px solid #adadad"></div>
<div class="t" style="left:415px;top:557.8px;font-size:11.4px;color:#000">Show Catalogue</div>
<svg class="a" style="left:500.5px;top:559px" width="5" height="9"><path d="M0.2 0.8 L4.5 4.5 L0.2 8.2Z" fill="#000"/></svg>
<div class="a" style="left:521.4px;top:551px;width:118.89999999999998px;height:22px;background:#e1e1e1;border:1px solid #adadad"></div>
<div class="t" style="left:529.5px;top:557.8px;font-size:11.4px;color:#000">Search Catalogue/s</div>
<svg class="a" style="left:633px;top:559px" width="5" height="9"><path d="M0.2 0.8 L4.5 4.5 L0.2 8.2Z" fill="#000"/></svg>
<div class="a" style="left:652.3px;top:551px;width:62.30000000000007px;height:22px;background:#e1e1e1;border:1px solid #adadad"></div>
<div class="t" style="left:657.6px;top:557.8px;font-size:11.4px;color:#000">Sort List...</div>
<div class="a" style="left:726.6px;top:551px;width:79.79999999999995px;height:22px;background:#e1e1e1;border:1px solid #adadad"></div>
<div class="t" style="left:734px;top:557.8px;font-size:11.4px;color:#000">Add Special</div>
<svg class="a" style="left:798px;top:559px" width="5" height="9"><path d="M0.2 0.8 L4.5 4.5 L0.2 8.2Z" fill="#000"/></svg>
<div class="a" style="left:818.8px;top:551px;width:49.5px;height:22px;background:#e1e1e1;border:1px solid #adadad"></div>
<div class="t" style="left:826.6px;top:557.8px;font-size:11.4px;color:#000">Delete</div>
<svg class="a" style="left:860px;top:559px" width="5" height="9"><path d="M0.2 0.8 L4.5 4.5 L0.2 8.2Z" fill="#000"/></svg>
<div class="a" style="left:880.4px;top:551px;width:60.200000000000045px;height:22px;background:#cccccc;border:1px solid #bfbfbf"></div>
<div class="t" style="left:888.5px;top:557.8px;font-size:11.4px;color:#8d8d8d">Slew To</div>
<svg class="a" style="left:932px;top:559px" width="5" height="9"><path d="M0.2 0.8 L4.5 4.5 L0.2 8.2Z" fill="#a0a0a0"/></svg>
<div class="a" style="left:1316px;top:551px;width:22px;height:22px;background:#cce4f7;border:1px solid #0050b4"></div>
<svg class="a" style="left:1319px;top:554px" width="16" height="16"><rect x="0" y="0" width="16" height="16" fill="#000"/><circle cx="3" cy="3" r="0.6" fill="#fff"/><circle cx="12" cy="4" r="0.7" fill="#fff"/><circle cx="6" cy="10" r="0.6" fill="#fff"/><circle cx="13" cy="12" r="0.6" fill="#fff"/><circle cx="9" cy="6" r="0.5" fill="#fff"/><path d="M4 5 L8 11 L12 5" stroke="#888" stroke-width="0.6" fill="none"/></svg>
<div class="t" style="left:7.7px;top:587.6px;font-size:11.3px">ID:</div>
<div class="a" style="left:7px;top:602px;width:108px;height:22px;background:#fff;border:1px solid #7a7a7a"></div>
<div class="t" style="left:13.1px;top:607.4px;font-size:11.3px;overflow:hidden;width:99.9px">AG DRA</div>
<div class="t" style="left:7.7px;top:630.7px;font-size:11.3px">Name:</div>
<div class="a" style="left:7.5px;top:645px;width:106px;height:64px;background:#fff;border-top:2px solid #6a6a6a;border-left:2px solid #6a6a6a;border-right:1px solid #e3e3e3;border-bottom:1px solid #e3e3e3"></div>
<div class="a" style="left:126px;top:602px;width:22px;height:22px;background:#d9d9d9;border:1px solid #bcbcbc"></div>
<svg class="a" style="left:126px;top:602px" width="22" height="22"><circle cx="9.4" cy="8.8" r="4.6" fill="none" stroke="#000" stroke-width="1.5"/><path d="M12.6 12.2 L17 16.6" stroke="#000" stroke-width="2.8" stroke-linecap="round"/></svg>
<div class="a" style="left:126px;top:645px;width:22px;height:22px;background:#d9d9d9;border:1px solid #bcbcbc"></div>
<svg class="a" style="left:126px;top:645px" width="22" height="22"><circle cx="9.4" cy="8.8" r="4.6" fill="none" stroke="#000" stroke-width="1.5"/><path d="M12.6 12.2 L17 16.6" stroke="#000" stroke-width="2.8" stroke-linecap="round"/></svg>
<div class="t" style="left:163.4px;top:587.6px;font-size:11.3px">Right Ascension:</div>
<div class="t" style="left:163.4px;top:630.7px;font-size:11.3px">Declination:</div>
<div class="a" style="left:163.4px;top:602.2px;width:39.19999999999999px;height:21.299999999999955px;background:#fff;border:1px solid #7a7a7a"></div>
<div class="t" style="left:169.8px;top:607.3px;font-size:11.3px;overflow:hidden;width:30.799999999999983px">16</div>
<div class="t" style="left:205.8px;top:607.0px;font-size:11.3px">h</div>
<div class="a" style="left:216.3px;top:602.2px;width:37.19999999999999px;height:21.299999999999955px;background:#fff;border:1px solid #7a7a7a"></div>
<div class="t" style="left:221.8px;top:607.3px;font-size:11.3px;overflow:hidden;width:29.69999999999999px">01</div>
<div class="t" style="left:256.4px;top:607.0px;font-size:11.3px">m</div>
<div class="a" style="left:270.5px;top:602.2px;width:43.89999999999998px;height:21.299999999999955px;background:#fff;border:1px solid #7a7a7a"></div>
<div class="t" style="left:275.6px;top:607.3px;font-size:11.3px;overflow:hidden;width:36.799999999999955px">41.013</div>
<div class="t" style="left:319.2px;top:607.0px;font-size:11.3px">s</div>
<div class="a" style="left:163.4px;top:645.2px;width:39.19999999999999px;height:21.299999999999955px;background:#fff;border:1px solid #7a7a7a"></div>
<div class="t" style="left:170.4px;top:650.3px;font-size:11.3px;overflow:hidden;width:30.19999999999999px">+66</div>
<div class="t" style="left:205.5px;top:648px;font-size:10px">°</div>
<div class="a" style="left:216.3px;top:645.2px;width:37.19999999999999px;height:21.299999999999955px;background:#fff;border:1px solid #7a7a7a"></div>
<div class="t" style="left:221.8px;top:650.3px;font-size:11.3px;overflow:hidden;width:29.69999999999999px">48</div>
<div class="t" style="left:258.5px;top:648px;font-size:10px">'</div>
<div class="a" style="left:270.5px;top:645.2px;width:43.89999999999998px;height:21.299999999999955px;background:#fff;border:1px solid #7a7a7a"></div>
<div class="t" style="left:276.7px;top:650.3px;font-size:11.3px;overflow:hidden;width:35.69999999999999px">10.131</div>
<div class="t" style="left:319.5px;top:648px;font-size:10px">"</div>
<div class="t" style="left:332.2px;top:587.0px;font-size:11.3px">Magnitude:</div>
<div class="t" style="left:406.8px;top:587.0px;font-size:11.3px">Pos. Angle:</div>
<div class="a" style="left:332.2px;top:602.2px;width:65.10000000000002px;height:21.299999999999955px;background:#fff;border:1px solid #7a7a7a"></div>
<div class="t" style="left:337.8px;top:607.3px;font-size:11.3px;overflow:hidden;width:57.5px">9.7</div>
<div class="a" style="left:407.3px;top:602.2px;width:59.0px;height:21.299999999999955px;background:#fff;border:1px solid #7a7a7a"></div>
<div class="t" style="left:413px;top:607.3px;font-size:11.3px;overflow:hidden;width:51.30000000000001px">0</div>
<div class="t" style="left:332.2px;top:630.1px;font-size:11.3px">Magnitude:</div>
<div class="t" style="left:407.5px;top:630.1px;font-size:11.3px">Separation:</div>
<div class="a" style="left:332.2px;top:645.3px;width:65.10000000000002px;height:21.100000000000023px;background:#fff;border:1px solid #7a7a7a"></div>
<div class="a" style="left:407.3px;top:645.3px;width:59.0px;height:21.100000000000023px;background:#fff;border:1px solid #7a7a7a"></div>
<div class="t" style="left:125.4px;top:673.1px;font-size:11.3px">Type:</div>
<div class="t" style="left:216.4px;top:673.0px;font-size:11.3px">Comp:</div>
<div class="t" style="left:270.5px;top:673.0px;font-size:11.3px">Period:</div>
<div class="t" style="left:332.2px;top:673.0px;font-size:11.3px">Size:</div>
<div class="t" style="left:407.3px;top:673.0px;font-size:11.3px">Spectral:</div>
<div class="a" style="left:125.4px;top:688.2px;width:63.19999999999999px;height:21.199999999999932px;background:#fff;border:1px solid #7a7a7a"></div>
<div class="t" style="left:131.4px;top:693.2px;font-size:11.3px;overflow:hidden;width:55.19999999999999px">Star+Var St</div>
<div class="a" style="left:195px;top:691px;width:13px;height:15.5px;background:#cccccc;border:1px solid #c4c4c4"></div>
<svg class="a" style="left:199px;top:695px" width="6" height="8"><path d="M0.5 0.5 L5 4 L0.5 7.5Z" fill="#9a9a9a"/></svg>
<div class="a" style="left:216.3px;top:688.2px;width:37.19999999999999px;height:21.299999999999955px;background:#fff;border:1px solid #7a7a7a"></div>
<div class="a" style="left:270.5px;top:688.2px;width:43.89999999999998px;height:21.299999999999955px;background:#fff;border:1px solid #7a7a7a"></div>
<div class="a" style="left:332.2px;top:688.2px;width:65.10000000000002px;height:21.299999999999955px;background:#fff;border:1px solid #7a7a7a"></div>
<div class="a" style="left:407.3px;top:688.2px;width:59.0px;height:21.299999999999955px;background:#fff;border:1px solid #7a7a7a"></div>
<div class="t" style="left:413.5px;top:693.3px;font-size:11.3px;overflow:hidden;width:50.80000000000001px">K3IIIep</div>
<div class="a" style="left:477px;top:607px;width:631px;height:103px;background:#fff;border:1px solid #d9d9d9"></div>
<div class="a" style="left:528px;top:589px;width:47.2px;height:18.5px;background:#f0f0f0;border:1px solid #d9d9d9;border-bottom:none"></div>
<div class="t" style="left:533.5px;top:592.8px;font-size:11.5px">Cat</div>
<div class="a" style="left:574.2px;top:589px;width:92.2px;height:18.5px;background:#f0f0f0;border:1px solid #d9d9d9;border-bottom:none"></div>
<div class="t" style="left:581.3px;top:592.8px;font-size:11.5px">Annotations (1)</div>
<div class="a" style="left:665.4px;top:589px;width:47.2px;height:18.5px;background:#f0f0f0;border:1px solid #d9d9d9;border-bottom:none"></div>
<div class="t" style="left:672.5px;top:592.8px;font-size:11.5px">ODM</div>
<div class="a" style="left:477px;top:587.5px;width:51.5px;height:21px;background:#fff;border:1px solid #d9d9d9;border-bottom:none"></div>
<div class="t" style="left:485.4px;top:591.1px;font-size:11.5px">Notes</div>
<div class="a" style="left:486px;top:620.5px;width:616px;height:82px;background:#fff;border-top:2px solid #646464;border-left:2px solid #646464;border-right:1px solid #e3e3e3;border-bottom:1px solid #e3e3e3"></div>
<svg class="a" style="left:488px;top:618px;font-family:'Liberation Sans'" width="596" height="84"><text x="0.5" y="16.0" font-size="11.2" textLength="582.2" lengthAdjust="spacingAndGlyphs" xml:space="preserve">A.K.A.: SBC9 884, 2E  3573, 2RE J1601+664, 2RE J160133+664805, AAVSO 1601+67, AG+66  715, BD+67   922, BPS BS</text><text x="0.5" y="29.0" font-size="11.2" textLength="582.2" lengthAdjust="spacingAndGlyphs" xml:space="preserve">16087-0012, EM* CDS  889, GCRV  9231, GEN# +0.06700922, GSC 04195-00254, HIC  78512, HIP  78512, IRAS 16013+</text><text x="0.5" y="42.0" font-size="11.2" textLength="583.9" lengthAdjust="spacingAndGlyphs" xml:space="preserve">6656, JP11   236, PPM  19692, RBS  1547, SAO  16931, SV* SVS  1155, TYC 4195-254-1, UBV   13635, V* AG Dra, 2MASS</text><text x="0.5" y="55.1" font-size="11.2" textLength="537.0" lengthAdjust="spacingAndGlyphs" xml:space="preserve">J16014101+6648101, 1ES 1601+66.9, 1RXS J160141.2+664811, 2E 1601.3+6656, RX J1601.6+6648, Gaia DR1</text><text x="0.5" y="68.1" font-size="11.2" textLength="348.2" lengthAdjust="spacingAndGlyphs" xml:space="preserve">1642955248488167808, WEB 13272, Gaia DR2 1642955252784454144;</text><text x="0.5" y="81.1" font-size="11.2" textLength="565.1" lengthAdjust="spacingAndGlyphs" xml:space="preserve">Types: Star, Emission-line Star, Variable Star, Infra-Red source, UV-emission source, X-ray source, Spectroscopic</text></svg>
<div class="a" style="left:1085px;top:622.5px;width:15.5px;height:79px;background:#f0f0f0"></div>
<div class="a" style="left:1086px;top:639.4px;width:13.5px;height:34.5px;background:#cdcdcd"></div>
<svg class="a" style="left:1088px;top:627px" width="10" height="7"><path d="M1 5.5 L5 1.5 L9 5.5" fill="none" stroke="#505050" stroke-width="1.2"/></svg>
<svg class="a" style="left:1088px;top:690px" width="10" height="7"><path d="M1 1.5 L5 5.5 L9 1.5" fill="none" stroke="#505050" stroke-width="1.2"/></svg>
<svg class="a" style="left:1119px;top:646px" width="7" height="18"><path d="M1.5 1V17M3.5 1V17M5.5 1V17" stroke="#808080" stroke-width="0.9"/></svg>
<div class="t" style="left:1134.4px;top:587.0px;font-size:11.3px">User-defined Fields:</div>
<div class="a" style="left:1133px;top:602px;width:205px;height:108px;background:#fff;border:1px solid #828282"></div>
<div class="a" style="left:1134px;top:638.2px;width:203px;height:15.5px;background:#efefef"></div>
<div class="a" style="left:1134px;top:670.2px;width:203px;height:15.8px;background:#efefef"></div>
<div class="a" style="left:1134px;top:702px;width:203px;height:7px;background:#efefef"></div>
<div class="a" style="left:1134px;top:653.5px;width:203px;height:1px;background:#d0d0d0"></div>
<div class="a" style="left:1187px;top:603px;width:1px;height:106px;background:#dcdcdc"></div>
<div class="t" style="left:1135px;top:606.5px;width:48px;text-align:right;font-size:11.3px">Field</div>
<div class="t" style="left:1193px;top:606.5px;font-size:11.3px">Value</div>
<div class="t" style="left:1135px;top:625.6px;width:48px;text-align:right;font-size:11.3px">Priority</div>
<div class="t" style="left:1192px;top:625.6px;font-size:11.3px">0</div>
<div class="t" style="left:1130px;top:641.3px;width:53px;text-align:right;font-size:11.3px">Cadence</div>
<div class="t" style="left:1192px;top:641.3px;font-size:11.3px">30</div>
<!--/bottom-->
</body></html>
